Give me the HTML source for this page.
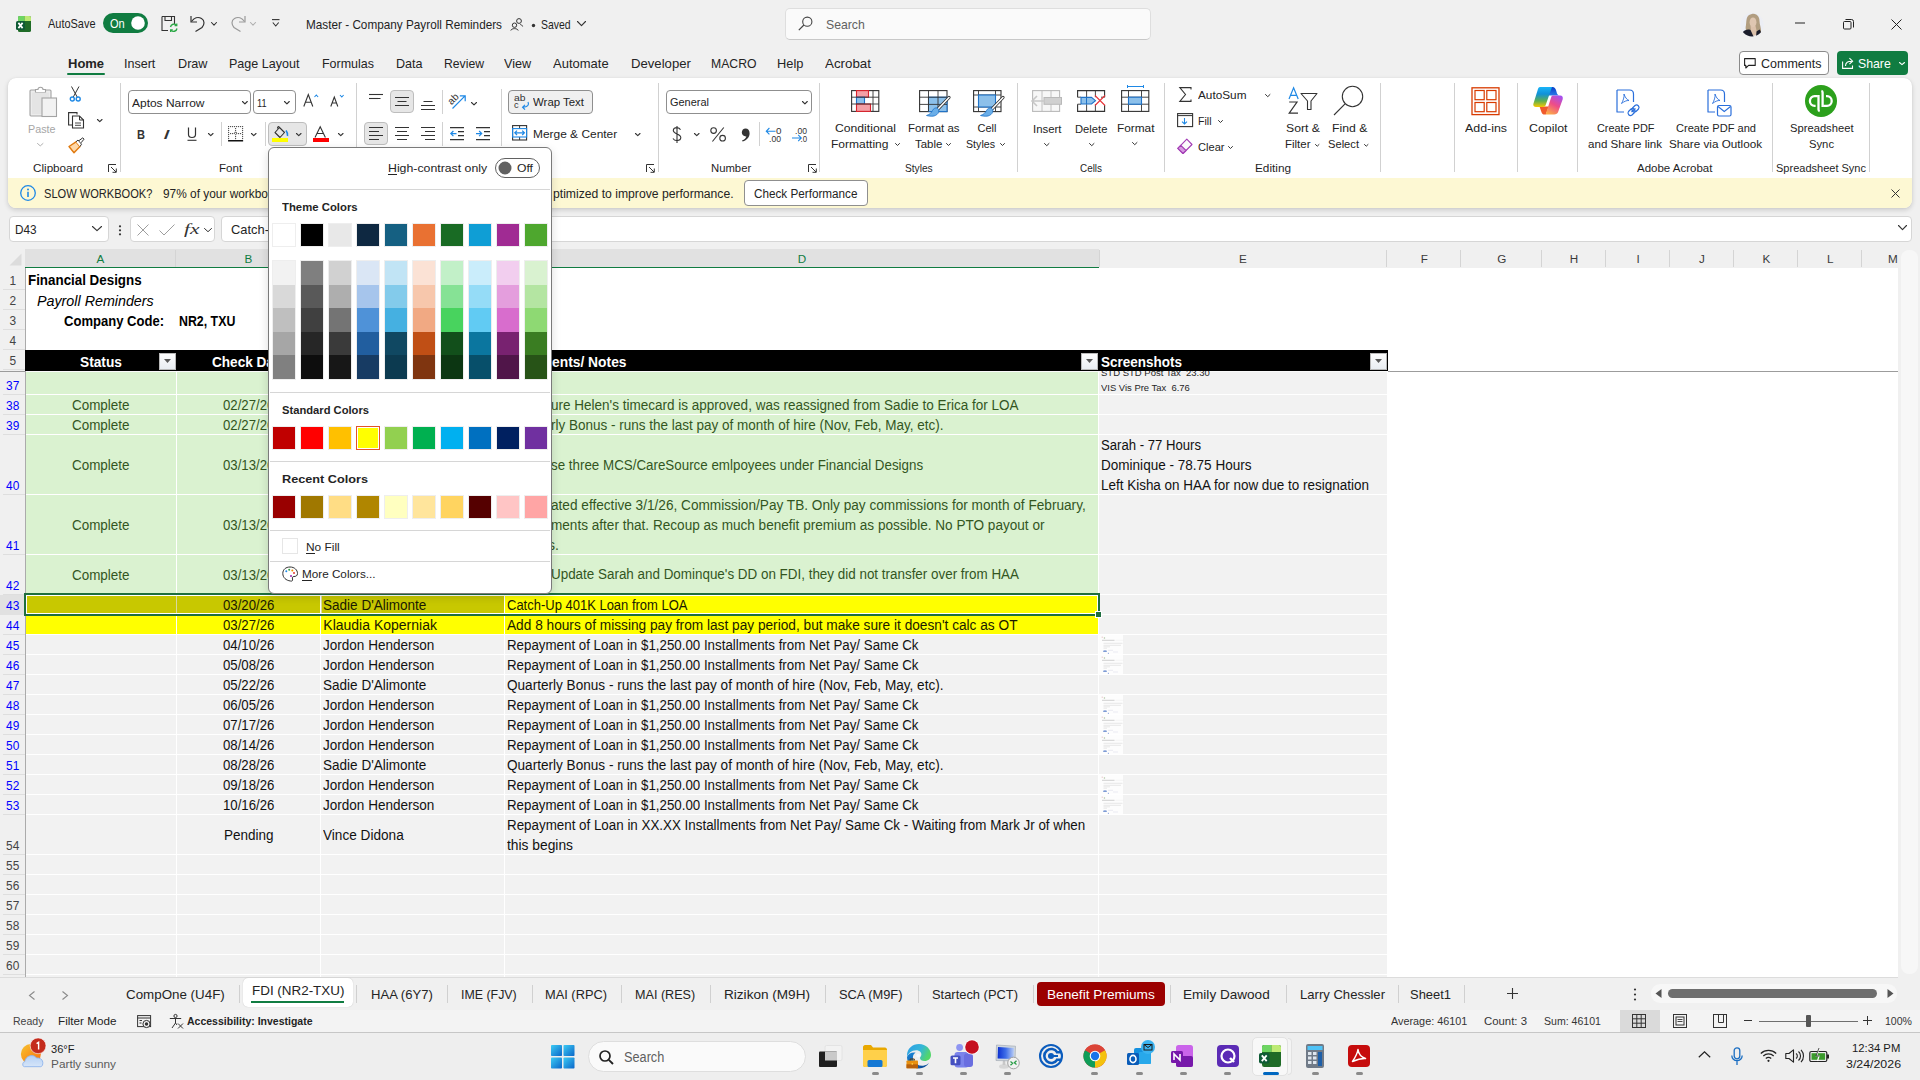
<!DOCTYPE html>
<html><head><meta charset="utf-8">
<style>
*{box-sizing:border-box;margin:0;padding:0}
html,body{width:1920px;height:1080px;overflow:hidden;background:#f0f0f0;font-family:"Liberation Sans",sans-serif;color:#1f1f1f}
.a{position:absolute}
.t{position:absolute;white-space:nowrap;line-height:1;transform-origin:0 0}
svg{position:absolute;overflow:visible}
</style></head><body>
<div class="a" style="left:0px;top:0px;width:1920px;height:78px;background:#f0f0f0;"></div>
<svg style="left:16px;top:16px;" width="16" height="16" viewBox="0 0 16 16"><rect x="2" y="0" width="13" height="16" rx="1.6" fill="#1f6b27"/>
<path d="M3.6 0 H8.5 V5 H2 V1.6 A1.6 1.6 0 0 1 3.6 0Z" fill="#6ed563"/><path d="M8.5 0 H13.4 A1.6 1.6 0 0 1 15 1.6 V5 H8.5Z" fill="#bdea74"/>
<rect x="0" y="5" width="9" height="9" rx="1.6" fill="#0e5a35"/>
<path d="M2.4 6.9 L6.6 12.1 M6.6 6.9 L2.4 12.1" stroke="#fff" stroke-width="1.7"/></svg>
<div class="t" style="left:47.8px;top:17.8px;font-size:12.6px;color:#1f1f1f;transform:scaleX(0.8698);">AutoSave</div>
<div class="a" style="left:103px;top:13px;width:45px;height:20px;background:#107c41;border-radius:10px;"></div>
<div class="t" style="left:109.7px;top:17.8px;font-size:12.6px;color:#ffffff;transform:scaleX(0.8750);">On</div>
<svg style="left:131px;top:16px;" width="14" height="14" viewBox="0 0 14 14"><circle cx="7" cy="7" r="6.8" fill="#fff"/></svg>
<svg style="left:161px;top:15px;" width="17" height="17" viewBox="0 0 17 17"><path d="M1 1.5 H13.5 V9 M1 1.5 V15.5 H7" fill="none" stroke="#333" stroke-width="1.1"/>
<path d="M4 1.5 V5.5 H10.5 V1.5" fill="none" stroke="#333" stroke-width="1.1"/>
<path d="M9.5 12 A3.6 3.6 0 0 1 15.6 10.2 M16 13.5 A3.6 3.6 0 0 1 9.9 15.3" fill="none" stroke="#2aa845" stroke-width="1.4"/>
<path d="M15.8 8.4 V10.6 H13.6 M9.6 17 V14.8 H11.8" fill="none" stroke="#2aa845" stroke-width="1.2"/></svg>
<svg style="left:190px;top:15px;" width="16" height="17" viewBox="0 0 16 17"><path d="M1 1 V7 H7" fill="none" stroke="#333" stroke-width="1.2"/><path d="M1.5 6.5 C4 3 8 1.5 11.5 3.5 C15 5.5 14.5 9.5 12 12.5 L5.5 16.5" fill="none" stroke="#333" stroke-width="1.2"/></svg>
<svg style="left:211px;top:22px;" width="6" height="3.5" viewBox="0 0 6 3.5"><path d="M0.5 0.5 L3.0 3.2 L5.5 0.5" fill="none" stroke="#333" stroke-width="1.1" stroke-linecap="round" stroke-linejoin="round"/></svg>
<svg style="left:230px;top:15px;" width="16" height="17" viewBox="0 0 16 17"><path d="M15 1 V7 H9" fill="none" stroke="#9a9a9a" stroke-width="1.2"/><path d="M14.5 6.5 C12 3 8 1.5 4.5 3.5 C1 5.5 1.5 9.5 4 12.5 L10.5 16.5" fill="none" stroke="#9a9a9a" stroke-width="1.2"/></svg>
<svg style="left:250px;top:22px;" width="6" height="3.5" viewBox="0 0 6 3.5"><path d="M0.5 0.5 L3.0 3.2 L5.5 0.5" fill="none" stroke="#b0b0b0" stroke-width="1.1" stroke-linecap="round" stroke-linejoin="round"/></svg>
<svg style="left:272px;top:19px;" width="8" height="9" viewBox="0 0 8 9"><path d="M0 0.6 H7.5" stroke="#333" stroke-width="1.1"/><path d="M0.8 3.5 L3.75 7 L6.7 3.5" fill="none" stroke="#333" stroke-width="1.1"/></svg>
<div class="t" style="left:305.6px;top:19.0px;font-size:12.6px;color:#1f1f1f;transform:scaleX(0.9335);">Master - Company Payroll Reminders</div>
<svg style="left:510px;top:18px;" width="13" height="13" viewBox="0 0 13 13"><circle cx="9" cy="3" r="2.4" fill="none" stroke="#333" stroke-width="1"/><circle cx="4.5" cy="7.2" r="2.2" fill="none" stroke="#333" stroke-width="1"/>
<path d="M0.8 12.5 C1.5 10 7.5 10 8.2 12.5" fill="none" stroke="#333" stroke-width="1"/><path d="M10.2 6.5 C11 6.5 12.4 7.3 12.6 8.5" fill="none" stroke="#333" stroke-width="1"/></svg>
<svg style="left:531px;top:23px;" width="5" height="5" viewBox="0 0 5 5"><circle cx="2.5" cy="2.5" r="1.7" fill="#333"/></svg>
<div class="t" style="left:541.4px;top:19.0px;font-size:12.6px;color:#1f1f1f;transform:scaleX(0.8289);">Saved</div>
<svg style="left:577px;top:21px;" width="9" height="5" viewBox="0 0 9 5"><path d="M0.5 0.5 L4.5 4.7 L8.5 0.5" fill="none" stroke="#333" stroke-width="1.1" stroke-linecap="round" stroke-linejoin="round"/></svg>
<div class="a" style="left:785px;top:8px;width:366px;height:32px;background:#fafafa;border:1px solid #dedede;border-bottom-color:#c8c8c8;border-radius:5px"></div>
<svg style="left:798px;top:16px;" width="15" height="15" viewBox="0 0 15 15"><circle cx="9.3" cy="5.7" r="4.6" fill="none" stroke="#444" stroke-width="1.1"/><path d="M5.9 9 L0.8 14.2" stroke="#444" stroke-width="1.2"/></svg>
<div class="t" style="left:826.0px;top:19.2px;font-size:12.6px;color:#616161;transform:scaleX(0.9724);">Search</div>
<svg style="left:1740px;top:13px;" width="24" height="24" viewBox="0 0 24 24"><defs><clipPath id="av"><circle cx="12" cy="11.7" r="11.7"/></clipPath></defs>
<g clip-path="url(#av)"><rect width="24" height="24" fill="#eceef4"/>
<path d="M12.5 0.8 C17 0.8 19.5 3.5 19.5 8 C19.5 12 21.5 15 21 19 C19 21 16 21 15 20 L9 20 C6 19 5 16 6 12 C6.5 9 6 4 9 2Z" fill="#b19d80"/>
<path d="M10.5 13 L15.5 13 L17.5 22 L11.5 23Z" fill="#dcc1ab"/>
<ellipse cx="13" cy="9.3" rx="3.4" ry="4.9" fill="#dfc6b1"/>
<path d="M2.5 19.5 C5 16.5 8 16 10.5 17 L14 24.5 H3Z" fill="#1b1d2b"/><path d="M16.5 18.5 L19.5 16.5 C21 18 21.5 20.5 20.5 22.5 L16 24Z" fill="#1b1d2b"/></g></svg>
<svg style="left:1795px;top:22px;" width="11" height="2" viewBox="0 0 11 2"><path d="M0 1 H10" stroke="#222" stroke-width="1"/></svg>
<svg style="left:1843px;top:19px;" width="11" height="11" viewBox="0 0 11 11"><rect x="0.5" y="2.5" width="7.5" height="7.5" rx="1" fill="none" stroke="#222" stroke-width="1"/><path d="M2.5 0.5 H8.5 A2 2 0 0 1 10.5 2.5 V8.5" fill="none" stroke="#222" stroke-width="1"/></svg>
<svg style="left:1891px;top:19px;" width="11" height="11" viewBox="0 0 11 11"><path d="M0.5 0.5 L10.5 10.5 M10.5 0.5 L0.5 10.5" stroke="#222" stroke-width="1"/></svg>
<div class="t" style="left:67.5px;top:58.0px;font-size:12.6px;color:#242424;font-weight:bold;transform:scaleX(1.0317);">Home</div>
<div class="t" style="left:124.4px;top:58.0px;font-size:12.6px;color:#242424;transform:scaleX(0.9938);">Insert</div>
<div class="t" style="left:177.5px;top:58.0px;font-size:12.6px;color:#242424;transform:scaleX(1.0038);">Draw</div>
<div class="t" style="left:229.4px;top:58.0px;font-size:12.6px;color:#242424;transform:scaleX(0.9954);">Page Layout</div>
<div class="t" style="left:322.4px;top:58.0px;font-size:12.6px;color:#242424;transform:scaleX(0.9908);">Formulas</div>
<div class="t" style="left:396.0px;top:58.0px;font-size:12.6px;color:#242424;">Data</div>
<div class="t" style="left:443.9px;top:58.0px;font-size:12.6px;color:#242424;transform:scaleX(0.9687);">Review</div>
<div class="t" style="left:503.8px;top:58.0px;font-size:12.6px;color:#242424;transform:scaleX(1.0048);">View</div>
<div class="t" style="left:552.9px;top:58.0px;font-size:12.6px;color:#242424;transform:scaleX(1.0315);">Automate</div>
<div class="t" style="left:630.8px;top:58.0px;font-size:12.6px;color:#242424;transform:scaleX(1.0435);">Developer</div>
<div class="t" style="left:710.8px;top:58.0px;font-size:12.6px;color:#242424;transform:scaleX(0.9706);">MACRO</div>
<div class="t" style="left:776.9px;top:58.0px;font-size:12.6px;color:#242424;transform:scaleX(1.0193);">Help</div>
<div class="t" style="left:824.8px;top:58.0px;font-size:12.6px;color:#242424;transform:scaleX(1.0599);">Acrobat</div>
<div class="a" style="left:67px;top:73px;width:38px;height:2.2px;background:#107c41;border-radius:1px;"></div>
<div class="a" style="left:1739px;top:51px;width:90px;height:24px;background:#fff;border:1px solid #8a8a8a;border-radius:4px"></div>
<svg style="left:1744px;top:58px;" width="12" height="11" viewBox="0 0 12 11"><path d="M0.6 0.6 H11.2 V7.4 H4.6 L1.8 10 V7.4 H0.6Z" fill="none" stroke="#222" stroke-width="1.1" stroke-linejoin="round"/></svg>
<div class="t" style="left:1760.6px;top:57.7px;font-size:12.6px;color:#242424;transform:scaleX(0.9920);">Comments</div>
<div class="a" style="left:1837px;top:51px;width:71px;height:24px;background:#107c41;border-radius:4px"></div>
<svg style="left:1842px;top:57px;" width="12" height="12" viewBox="0 0 12 12"><path d="M0.6 4.5 V11.4 H10.5 V8.5" fill="none" stroke="#fff" stroke-width="1.1"/><path d="M3.5 9 C3.5 5.5 6 4.2 9.5 4.2 M7.4 1.2 L10.6 4.2 L7.4 7.2" fill="none" stroke="#fff" stroke-width="1.1"/></svg>
<div class="t" style="left:1858.0px;top:57.7px;font-size:12.6px;color:#ffffff;transform:scaleX(0.9760);">Share</div>
<svg style="left:1899px;top:62px;" width="6" height="3" viewBox="0 0 6 3"><path d="M0.5 0.5 L3.0 2.7 L5.5 0.5" fill="none" stroke="#fff" stroke-width="1.1" stroke-linecap="round" stroke-linejoin="round"/></svg>
<div class="a" style="left:8px;top:78px;width:1904px;height:130px;background:#fff;border-radius:8px;box-shadow:0 2px 5px rgba(0,0,0,.16),0 0 1px rgba(0,0,0,.12);overflow:hidden"><div class="a" style="left:0;top:100px;width:1904px;height:30px;background:#fdf8d3"></div></div>
<svg style="left:29px;top:86px;" width="29" height="32" viewBox="0 0 29 32"><rect x="1" y="4" width="21" height="26" rx="1" fill="#ececec" stroke="#a3a3a3" stroke-width="1.1"/>
<path d="M6.5 6.5 V3.5 H9 C9 0.5 14 0.5 14 3.5 H16.5 V6.5Z" fill="#fff" stroke="#a3a3a3" stroke-width="1.1"/>
<rect x="3" y="6.5" width="17" height="21.5" fill="#e4e4e4"/>
<rect x="13" y="12" width="14.5" height="18.5" fill="#f2f2f2" stroke="#a3a3a3" stroke-width="1.1"/></svg>
<div class="t" style="left:27.6px;top:124.0px;font-size:11.2px;color:#a6a6a6;transform:scaleX(0.9613);">Paste</div>
<svg style="left:37px;top:143px;" width="6.5" height="3.2" viewBox="0 0 6.5 3.2"><path d="M0.5 0.5 L3.25 2.9000000000000004 L6.0 0.5" fill="none" stroke="#b0b0b0" stroke-width="1" stroke-linecap="round" stroke-linejoin="round"/></svg>
<svg style="left:69px;top:86px;" width="13" height="16" viewBox="0 0 13 16"><path d="M2.5 0.5 L8.2 11 M10 0.5 L4.3 11" stroke="#333" stroke-width="1"/>
<circle cx="3.3" cy="13" r="2" fill="none" stroke="#1e88e5" stroke-width="1.4"/><circle cx="9.2" cy="13" r="2" fill="none" stroke="#1e88e5" stroke-width="1.4"/></svg>
<svg style="left:68px;top:112px;" width="17" height="17" viewBox="0 0 17 17"><path d="M9 2.5 V0.6 H0.6 V13 H4" fill="none" stroke="#333" stroke-width="1.1"/>
<path d="M4.5 4 H11.5 L15.5 8 V16 H4.5Z" fill="#fff" stroke="#333" stroke-width="1.1"/><path d="M11.5 4 V8 H15.5" fill="none" stroke="#333" stroke-width="1"/>
<path d="M7 11 H13 M7 13.3 H13" stroke="#333" stroke-width="0.9"/></svg>
<svg style="left:96.5px;top:119px;" width="5.5" height="3" viewBox="0 0 5.5 3"><path d="M0.5 0.5 L2.75 2.7 L5.0 0.5" fill="none" stroke="#333" stroke-width="1.1" stroke-linecap="round" stroke-linejoin="round"/></svg>
<svg style="left:68px;top:137px;" width="17" height="17" viewBox="0 0 17 17"><path d="M1 9.5 L8 4.8 L12 9.5 L6 15.8Z" fill="#ffd8a8" stroke="#e07a10" stroke-width="1.4" stroke-linejoin="round"/>
<path d="M8 4.8 L10 3 L13.5 7.2 L12 9.5" fill="#fff" stroke="#333" stroke-width="1"/><path d="M11 3.6 L14.8 0.8 L16 2.2 L13 5.8" fill="#fff" stroke="#333" stroke-width="1"/></svg>
<div class="t" style="left:32.7px;top:162.8px;font-size:10.5px;color:#1f1f1f;transform:scaleX(1.1125);">Clipboard</div>
<svg style="left:108px;top:164px;" width="9" height="9" viewBox="0 0 9 9"><path d="M0.5 8 V0.5 H8" fill="none" stroke="#333" stroke-width="1"/><path d="M3 3 L8 8 M4.5 8.3 H8.3 V4.5" fill="none" stroke="#333" stroke-width="1"/></svg>
<div class="a" style="left:120px;top:83px;width:1px;height:89px;background:#d1d1d1;"></div>
<div class="a" style="left:128px;top:90px;width:123px;height:24px;border:1px solid #8f8f8f;border-radius:4px;background:#fff"></div>
<div class="t" style="left:131.5px;top:96.7px;font-size:11.7px;color:#242424;transform:scaleX(1.0240);">Aptos Narrow</div>
<svg style="left:241.5px;top:101px;" width="5.8" height="3.2" viewBox="0 0 5.8 3.2"><path d="M0.5 0.5 L2.9 2.9000000000000004 L5.3 0.5" fill="none" stroke="#333" stroke-width="1.1" stroke-linecap="round" stroke-linejoin="round"/></svg>
<div class="a" style="left:253px;top:90px;width:43px;height:24px;border:1px solid #8f8f8f;border-radius:4px;background:#fff"></div>
<div class="t" style="left:256.9px;top:96.7px;font-size:11.7px;color:#242424;transform:scaleX(0.7913);">11</div>
<svg style="left:283.8px;top:101px;" width="5.8" height="3.2" viewBox="0 0 5.8 3.2"><path d="M0.5 0.5 L2.9 2.9000000000000004 L5.3 0.5" fill="none" stroke="#333" stroke-width="1.1" stroke-linecap="round" stroke-linejoin="round"/></svg>
<svg style="left:303px;top:93px;" width="16" height="14" viewBox="0 0 16 14"><path d="M0.8 13.5 L5.3 1.5 L9.8 13.5 M2.5 9.3 H8.2" fill="none" stroke="#333" stroke-width="1.1"/><path d="M11.5 4 L13.3 2 L15.1 4" fill="none" stroke="#1e88e5" stroke-width="1.1"/></svg>
<svg style="left:330px;top:94px;" width="15" height="13" viewBox="0 0 15 13"><path d="M0.8 12.5 L4.3 3 L7.8 12.5 M2.1 9 H6.5" fill="none" stroke="#333" stroke-width="1.1"/><path d="M10 1 L11.8 3 L13.6 1" fill="none" stroke="#1e88e5" stroke-width="1.1"/></svg>
<div class="t" style="left:136.5px;top:127.8px;font-size:13.5px;color:#333;font-weight:bold;transform:scaleX(0.8206);">B</div>
<div class="t" style="left:162.5px;top:127.8px;font-size:13.5px;color:#333;font-style:italic;transform:scaleX(1.8663);">I</div>
<svg style="left:187px;top:127px;" width="10" height="14" viewBox="0 0 10 14"><path d="M1.5 0.5 V7.5 C1.5 11.5 8.5 11.5 8.5 7.5 V0.5" fill="none" stroke="#333" stroke-width="1.2"/><path d="M0.5 13.3 H9.5" stroke="#333" stroke-width="1.1"/></svg>
<svg style="left:207.5px;top:133px;" width="5.5" height="3" viewBox="0 0 5.5 3"><path d="M0.5 0.5 L2.75 2.7 L5.0 0.5" fill="none" stroke="#333" stroke-width="1.1" stroke-linecap="round" stroke-linejoin="round"/></svg>
<div class="a" style="left:221px;top:122px;width:1px;height:24px;background:#d1d1d1;"></div>
<svg style="left:228px;top:126px;" width="16" height="16" viewBox="0 0 16 16"><circle cx="0.6" cy="0.6" r="0.65" fill="#333"/><circle cx="2.6" cy="0.6" r="0.65" fill="#333"/><circle cx="4.6" cy="0.6" r="0.65" fill="#333"/><circle cx="6.6" cy="0.6" r="0.65" fill="#333"/><circle cx="8.6" cy="0.6" r="0.65" fill="#333"/><circle cx="10.6" cy="0.6" r="0.65" fill="#333"/><circle cx="12.6" cy="0.6" r="0.65" fill="#333"/><circle cx="14.6" cy="0.6" r="0.65" fill="#333"/><circle cx="0.6" cy="2.6" r="0.65" fill="#333"/><circle cx="14.6" cy="2.6" r="0.65" fill="#333"/><circle cx="0.6" cy="4.6" r="0.65" fill="#333"/><circle cx="14.6" cy="4.6" r="0.65" fill="#333"/><circle cx="0.6" cy="6.6" r="0.65" fill="#333"/><circle cx="14.6" cy="6.6" r="0.65" fill="#333"/><circle cx="0.6" cy="8.6" r="0.65" fill="#333"/><circle cx="14.6" cy="8.6" r="0.65" fill="#333"/><circle cx="0.6" cy="10.6" r="0.65" fill="#333"/><circle cx="14.6" cy="10.6" r="0.65" fill="#333"/><circle cx="0.6" cy="12.6" r="0.65" fill="#333"/><circle cx="14.6" cy="12.6" r="0.65" fill="#333"/><circle cx="7.6" cy="2.6" r="0.65" fill="#333"/><circle cx="7.6" cy="4.6" r="0.65" fill="#333"/><circle cx="7.6" cy="10.6" r="0.65" fill="#333"/><circle cx="7.6" cy="12.6" r="0.65" fill="#333"/><circle cx="2.6" cy="7.6" r="0.65" fill="#333"/><circle cx="4.6" cy="7.6" r="0.65" fill="#333"/><circle cx="10.6" cy="7.6" r="0.65" fill="#333"/><circle cx="12.6" cy="7.6" r="0.65" fill="#333"/><path d="M7.6 5.9 L9 7.3 L7.6 8.7 L6.2 7.3Z" fill="none" stroke="#333" stroke-width="0.9"/><rect x="0" y="13.9" width="15.2" height="1.5" rx="0.5" fill="#111"/></svg>
<svg style="left:251px;top:133px;" width="5.5" height="3" viewBox="0 0 5.5 3"><path d="M0.5 0.5 L2.75 2.7 L5.0 0.5" fill="none" stroke="#333" stroke-width="1.1" stroke-linecap="round" stroke-linejoin="round"/></svg>
<div class="a" style="left:265px;top:122px;width:1px;height:24px;background:#d1d1d1;"></div>
<div class="a" style="left:268px;top:122px;width:39px;height:24px;border:1px solid #bdbdbd;border-radius:4px;background:#e6e6e6"></div>
<svg style="left:273px;top:126px;" width="17" height="12" viewBox="0 0 17 12"><path d="M2 6.5 L6.5 1.5 L11.5 6.5 L7 11.5Z M6.5 1.5 C5.5 0 4.5 0.5 4.5 2.5" fill="none" stroke="#333" stroke-width="1.1" stroke-linejoin="round"/><path d="M13 4.5 C14.5 6.5 15 8 14.5 10" fill="none" stroke="#1e88e5" stroke-width="1.6"/></svg>
<div class="a" style="left:272px;top:138px;width:16px;height:4px;background:#ffff00;"></div>
<svg style="left:296px;top:133px;" width="5.5" height="3" viewBox="0 0 5.5 3"><path d="M0.5 0.5 L2.75 2.7 L5.0 0.5" fill="none" stroke="#333" stroke-width="1.1" stroke-linecap="round" stroke-linejoin="round"/></svg>
<svg style="left:314px;top:126px;" width="13" height="12" viewBox="0 0 13 12"><path d="M1 11.5 L6.2 0.8 L11.4 11.5 M3 7.5 H9.4" fill="none" stroke="#333" stroke-width="1.1"/></svg>
<div class="a" style="left:313px;top:138px;width:16px;height:4px;background:#ff0000;"></div>
<svg style="left:337.5px;top:133px;" width="5.5" height="3" viewBox="0 0 5.5 3"><path d="M0.5 0.5 L2.75 2.7 L5.0 0.5" fill="none" stroke="#333" stroke-width="1.1" stroke-linecap="round" stroke-linejoin="round"/></svg>
<div class="t" style="left:218.8px;top:162.8px;font-size:10.5px;color:#1f1f1f;transform:scaleX(1.1018);">Font</div>
<div class="a" style="left:356px;top:83px;width:1px;height:89px;background:#d1d1d1;"></div>
<svg style="left:369px;top:94px;" width="15" height="9" viewBox="0 0 15 9"><path d="M0 0.5 H14" stroke="#333" stroke-width="1.1"/><path d="M0 4.5 H9.5" stroke="#333" stroke-width="1.1"/></svg>
<div class="a" style="left:390px;top:90px;width:24px;height:23px;border:1px solid #bdbdbd;border-radius:4px;background:#e6e6e6"></div>
<svg style="left:395px;top:97px;" width="15" height="10" viewBox="0 0 15 10"><path d="M0 0.5 H14 M2.5 4.5 H11.5 M0 8.5 H14" stroke="#333" stroke-width="1.1"/></svg>
<svg style="left:421px;top:101px;" width="15" height="10" viewBox="0 0 15 10"><path d="M2.5 0.5 H11.5 M0 4.5 H14 M0 8.5 H14" stroke="#333" stroke-width="1.1"/></svg>
<svg style="left:369px;top:94px;" width="15" height="10" viewBox="0 0 15 10"><path d="M0 0.5 H14 M2.5 4.5 H11.5" stroke="#333" stroke-width="1.1"/></svg>
<div class="a" style="left:442px;top:90px;width:1px;height:24px;background:#d1d1d1;"></div>
<svg style="left:448px;top:92px;" width="19" height="18" viewBox="0 0 19 18"><text x="0" y="0" font-size="10" font-family="Liberation Sans" fill="#333" transform="translate(3.5 13.2) rotate(-45)">ab</text><path d="M4.5 16.5 L16.8 4.2 M11.8 3.8 H17.2 V9.2" fill="none" stroke="#1e88e5" stroke-width="1.2"/></svg>
<svg style="left:470.5px;top:101.5px;" width="6" height="3.2" viewBox="0 0 6 3.2"><path d="M0.5 0.5 L3.0 2.9000000000000004 L5.5 0.5" fill="none" stroke="#333" stroke-width="1.1" stroke-linecap="round" stroke-linejoin="round"/></svg>
<div class="a" style="left:501px;top:89px;width:1px;height:57px;background:#d1d1d1;"></div>
<div class="a" style="left:508px;top:90px;width:85px;height:24px;border:1px solid #8f8f8f;border-radius:4px;background:#f0f0f0"></div>
<svg style="left:514px;top:93px;" width="16" height="17" viewBox="0 0 16 17"><text x="0" y="8.2" font-size="9.2" font-family="Liberation Sans" fill="#333" textLength="11.5" lengthAdjust="spacingAndGlyphs">ab</text><text x="0" y="15" font-size="9.2" font-family="Liberation Sans" fill="#333">c</text><path d="M14 9 C15.5 12 13.5 14 9 14.2 M11 11.8 L8.6 14.2 L11 16.6" fill="none" stroke="#1e88e5" stroke-width="1.2"/></svg>
<div class="t" style="left:532.5px;top:96.1px;font-size:11.7px;color:#242424;transform:scaleX(0.9772);">Wrap Text</div>
<div class="a" style="left:364px;top:122px;width:24px;height:23px;border:1px solid #bdbdbd;border-radius:4px;background:#e6e6e6"></div>
<svg style="left:369px;top:127px;" width="15" height="14" viewBox="0 0 15 14"><path d="M0 0.5 H14 M0 4.5 H10 M0 8.5 H14 M0 12.5 H10" stroke="#333" stroke-width="1.1"/></svg>
<svg style="left:395px;top:127px;" width="15" height="14" viewBox="0 0 15 14"><path d="M0 0.5 H14 M2 4.5 H12 M0 8.5 H14 M2 12.5 H12" stroke="#333" stroke-width="1.1"/></svg>
<svg style="left:421px;top:127px;" width="15" height="14" viewBox="0 0 15 14"><path d="M0 0.5 H14 M4 4.5 H14 M0 8.5 H14 M4 12.5 H14" stroke="#333" stroke-width="1.1"/></svg>
<div class="a" style="left:442px;top:122px;width:1px;height:24px;background:#d1d1d1;"></div>
<svg style="left:450px;top:127px;" width="15" height="14" viewBox="0 0 15 14"><path d="M0 0.6 H14 M8 4.6 H14 M8 8.6 H14 M0 12.6 H14" stroke="#333" stroke-width="1.1"/><path d="M6.5 6.6 H0.8 M3.4 4 L0.8 6.6 L3.4 9.2" fill="none" stroke="#1e88e5" stroke-width="1.2"/></svg>
<svg style="left:476px;top:127px;" width="15" height="14" viewBox="0 0 15 14"><path d="M0 0.6 H14 M8 4.6 H14 M8 8.6 H14 M0 12.6 H14" stroke="#333" stroke-width="1.1"/><path d="M0 6.6 H5.7 M3.1 4 L5.7 6.6 L3.1 9.2" fill="none" stroke="#1e88e5" stroke-width="1.2"/></svg>
<svg style="left:512px;top:125px;" width="16" height="16" viewBox="0 0 16 16"><rect x="0.6" y="0.6" width="14" height="14.4" fill="none" stroke="#333" stroke-width="1.1"/><path d="M7.6 0.6 V3.6 M7.6 12 V15" stroke="#333" stroke-width="1"/><rect x="0.6" y="3.6" width="14" height="8.4" fill="none" stroke="#1e88e5" stroke-width="1.1"/><path d="M2.8 7.8 H12.4 M5 5.6 L2.8 7.8 L5 10 M10.2 5.6 L12.4 7.8 L10.2 10" fill="none" stroke="#1e88e5" stroke-width="1.2"/></svg>
<div class="t" style="left:532.5px;top:128.2px;font-size:11.7px;color:#242424;transform:scaleX(1.0206);">Merge &amp; Center</div>
<svg style="left:635px;top:133px;" width="5.5" height="3" viewBox="0 0 5.5 3"><path d="M0.5 0.5 L2.75 2.7 L5.0 0.5" fill="none" stroke="#333" stroke-width="1.1" stroke-linecap="round" stroke-linejoin="round"/></svg>
<svg style="left:646px;top:164px;" width="9" height="9" viewBox="0 0 9 9"><path d="M0.5 8 V0.5 H8" fill="none" stroke="#333" stroke-width="1"/><path d="M3 3 L8 8 M4.5 8.3 H8.3 V4.5" fill="none" stroke="#333" stroke-width="1"/></svg>
<div class="a" style="left:658px;top:83px;width:1px;height:89px;background:#d1d1d1;"></div>
<div class="a" style="left:666px;top:90px;width:146px;height:24px;border:1px solid #8f8f8f;border-radius:4px;background:#fff"></div>
<div class="t" style="left:669.6px;top:96.3px;font-size:11.7px;color:#242424;transform:scaleX(0.9356);">General</div>
<svg style="left:802px;top:101px;" width="5.8" height="3.2" viewBox="0 0 5.8 3.2"><path d="M0.5 0.5 L2.9 2.9000000000000004 L5.3 0.5" fill="none" stroke="#333" stroke-width="1.1" stroke-linecap="round" stroke-linejoin="round"/></svg>
<svg style="left:672px;top:126px;" width="10" height="17" viewBox="0 0 10 17"><path d="M8.5 3.8 C7.8 2.2 6.4 1.6 4.9 1.6 C2.7 1.6 1.3 2.8 1.3 4.6 C1.3 8.6 8.8 7.2 8.8 11.6 C8.8 13.4 7.2 14.6 5 14.6 C3.3 14.6 1.8 13.9 1 12.4 M5 0 V17" fill="none" stroke="#333" stroke-width="1.1"/></svg>
<svg style="left:693.5px;top:133px;" width="5.5" height="3" viewBox="0 0 5.5 3"><path d="M0.5 0.5 L2.75 2.7 L5.0 0.5" fill="none" stroke="#333" stroke-width="1.1" stroke-linecap="round" stroke-linejoin="round"/></svg>
<svg style="left:710px;top:127px;" width="17" height="15" viewBox="0 0 17 15"><circle cx="3.6" cy="3.6" r="2.8" fill="none" stroke="#333" stroke-width="1.1"/><circle cx="12.6" cy="11.2" r="2.8" fill="none" stroke="#333" stroke-width="1.1"/><path d="M13.8 0.5 L2.4 14.5" stroke="#333" stroke-width="1.1"/></svg>
<svg style="left:740.5px;top:128px;" width="10" height="14" viewBox="0 0 10 14"><path d="M4.5 0.5 C7 0.5 8.6 2.5 8.6 5.2 C8.6 9 6 12 1.6 13.6 L1 12.6 C3.6 11.3 5 9.8 5.4 8.4 C2.8 8.6 0.8 7 0.8 4.6 C0.8 2.1 2.5 0.5 4.5 0.5Z" fill="#333"/></svg>
<div class="a" style="left:759px;top:122px;width:1px;height:24px;background:#d1d1d1;"></div>
<svg style="left:765px;top:125px;" width="17" height="18" viewBox="0 0 17 18"><path d="M10.5 6.2 H1.3 M4.4 3 L1.3 6.2 L4.4 9.4" fill="none" stroke="#1e88e5" stroke-width="1.1"/><text x="11" y="8.8" font-size="9.5" font-family="Liberation Sans" fill="#333" textLength="5.5" lengthAdjust="spacingAndGlyphs">0</text><text x="4" y="16.8" font-size="9.5" font-family="Liberation Sans" fill="#333" textLength="12" lengthAdjust="spacingAndGlyphs">.00</text></svg>
<svg style="left:791px;top:125px;" width="17" height="18" viewBox="0 0 17 18"><text x="4" y="8.8" font-size="9.5" font-family="Liberation Sans" fill="#333" textLength="12" lengthAdjust="spacingAndGlyphs">.00</text><path d="M1 13 H10.3 M7.2 9.8 L10.3 13 L7.2 16.2" fill="none" stroke="#1e88e5" stroke-width="1.1"/><text x="9.5" y="16.8" font-size="9.5" font-family="Liberation Sans" fill="#333" textLength="6.5" lengthAdjust="spacingAndGlyphs">.0</text></svg>
<div class="t" style="left:710.8px;top:162.8px;font-size:10.5px;color:#1f1f1f;transform:scaleX(1.0765);">Number</div>
<svg style="left:808px;top:164px;" width="9" height="9" viewBox="0 0 9 9"><path d="M0.5 8 V0.5 H8" fill="none" stroke="#333" stroke-width="1"/><path d="M3 3 L8 8 M4.5 8.3 H8.3 V4.5" fill="none" stroke="#333" stroke-width="1"/></svg>
<div class="a" style="left:819px;top:83px;width:1px;height:89px;background:#d1d1d1;"></div>
<svg style="left:851px;top:90px;" width="29" height="22" viewBox="0 0 29 22"><rect x="0.6" y="0.6" width="27.2" height="20.8" fill="#fff" stroke="#333" stroke-width="1.1"/>
<rect x="5.5" y="0.6" width="12" height="6.6" fill="#f4a0a6" stroke="#d9232d" stroke-width="1.1"/>
<rect x="5.5" y="7.2" width="8" height="6.8" fill="#8cc0ea" stroke="#1e72c8" stroke-width="1.1"/>
<rect x="5.5" y="14" width="14" height="7.4" fill="#f4a0a6" stroke="#d9232d" stroke-width="1.1"/>
<path d="M22 0.6 V21.4 M0.6 7.2 H27.8 M0.6 14 H27.8" stroke="#333" stroke-width="0.9"/></svg>
<div class="t" style="left:834.6px;top:123.0px;font-size:11px;color:#242424;transform:scaleX(1.1065);">Conditional</div>
<div class="t" style="left:830.5px;top:139.1px;font-size:11px;color:#242424;transform:scaleX(1.0937);">Formatting</div>
<svg style="left:895px;top:143px;" width="5" height="2.8" viewBox="0 0 5 2.8"><path d="M0.5 0.5 L2.5 2.5 L4.5 0.5" fill="none" stroke="#333" stroke-width="1" stroke-linecap="round" stroke-linejoin="round"/></svg>
<svg style="left:919px;top:90px;" width="31" height="27" viewBox="0 0 31 27"><rect x="0.6" y="0.6" width="27.4" height="21" fill="#fff" stroke="#333" stroke-width="1.1"/>
<rect x="9.5" y="7.2" width="18.5" height="14.4" fill="#8cc0ea" stroke="#1e72c8" stroke-width="1.1"/>
<path d="M9.5 0.6 V21.6 M19 0.6 V21.6 M0.6 7.2 H28 M0.6 14.4 H28" stroke="#333" stroke-width="0.9"/>
<path d="M30 7.5 L19 19" stroke="#333" stroke-width="3.2" stroke-linecap="round"/><path d="M30 7.5 L19 19" stroke="#fff" stroke-width="1.5" stroke-linecap="round"/>
<path d="M18 18 C21 19 20.5 24.5 15 26 C12 26.5 9.5 26 7.5 25.5 C11 24.5 12.5 22.5 13.5 20.5 C14.5 18.5 16.5 17.5 18 18Z" fill="#6aaee8" stroke="#1e72c8" stroke-width="0.8"/></svg>
<div class="t" style="left:907.5px;top:123.0px;font-size:11px;color:#242424;transform:scaleX(1.0402);">Format as</div>
<div class="t" style="left:914.6px;top:139.1px;font-size:11px;color:#242424;transform:scaleX(1.0419);">Table</div>
<svg style="left:946px;top:143px;" width="5" height="2.8" viewBox="0 0 5 2.8"><path d="M0.5 0.5 L2.5 2.5 L4.5 0.5" fill="none" stroke="#333" stroke-width="1" stroke-linecap="round" stroke-linejoin="round"/></svg>
<svg style="left:973px;top:90px;" width="31" height="27" viewBox="0 0 31 27"><rect x="0.6" y="0.6" width="27.4" height="21" fill="#fff" stroke="#333" stroke-width="1.1"/>
<path d="M5.5 0.6 V21.6 M22.5 0.6 V21.6 M0.6 5 H28 M0.6 17 H28" stroke="#333" stroke-width="0.9"/>
<rect x="5.5" y="5" width="17" height="12" fill="#8cc0ea" stroke="#1e72c8" stroke-width="1.1"/>
<path d="M30 7.5 L19 19" stroke="#333" stroke-width="3.2" stroke-linecap="round"/><path d="M30 7.5 L19 19" stroke="#fff" stroke-width="1.5" stroke-linecap="round"/>
<path d="M18 18 C21 19 20.5 24.5 15 26 C12 26.5 9.5 26 7.5 25.5 C11 24.5 12.5 22.5 13.5 20.5 C14.5 18.5 16.5 17.5 18 18Z" fill="#6aaee8" stroke="#1e72c8" stroke-width="0.8"/></svg>
<div class="t" style="left:977.5px;top:123.0px;font-size:11px;color:#242424;">Cell</div>
<div class="t" style="left:966.0px;top:139.1px;font-size:11px;color:#242424;transform:scaleX(0.9681);">Styles</div>
<svg style="left:999.5px;top:143px;" width="5" height="2.8" viewBox="0 0 5 2.8"><path d="M0.5 0.5 L2.5 2.5 L4.5 0.5" fill="none" stroke="#333" stroke-width="1" stroke-linecap="round" stroke-linejoin="round"/></svg>
<div class="t" style="left:904.6px;top:162.8px;font-size:10.5px;color:#1f1f1f;transform:scaleX(0.9688);">Styles</div>
<div class="a" style="left:1017px;top:83px;width:1px;height:89px;background:#d1d1d1;"></div>
<svg style="left:1031px;top:90px;" width="32" height="22" viewBox="0 0 32 22"><rect x="1.6" y="0.6" width="27" height="20.8" fill="#f7f7f7" stroke="#b9b9b9" stroke-width="1.1"/>
<path d="M11 0.6 V21.4 M20 0.6 V21.4" stroke="#b9b9b9" stroke-width="0.9"/>
<rect x="13" y="7.5" width="17.5" height="6.8" fill="#d0d0d0" stroke="#b9b9b9" stroke-width="1"/>
<path d="M14 11 H1.5 M6 6 L1 11 L6 16" fill="none" stroke="#c7c7c7" stroke-width="1.6"/></svg>
<div class="t" style="left:1032.6px;top:124.0px;font-size:11px;color:#242424;transform:scaleX(1.0323);">Insert</div>
<svg style="left:1044px;top:143px;" width="5.5" height="3" viewBox="0 0 5.5 3"><path d="M0.5 0.5 L2.75 2.7 L5.0 0.5" fill="none" stroke="#333" stroke-width="1" stroke-linecap="round" stroke-linejoin="round"/></svg>
<svg style="left:1077px;top:90px;" width="30" height="22" viewBox="0 0 30 22"><path d="M0.6 7.2 V0.6 H27.6 V7.2 M0.6 14.2 V21.4 H27.6 V15" fill="#fff" stroke="#333" stroke-width="1.1"/>
<path d="M9.6 0.6 V7.2 M18.4 0.6 V7.2 M9.6 14.2 V21.4 M18.4 14.2 V21.4 M0.6 7.2 H4 M0.6 14.2 H4 M24 7.2 H27.6" stroke="#333" stroke-width="0.9"/>
<path d="M4 7.4 H14.5 L18.5 10.7 L14.5 14 H4Z" fill="#8cc0ea" stroke="#1e72c8" stroke-width="1.1"/><path d="M9.5 7.4 V14" stroke="#1e72c8" stroke-width="1"/>
<path d="M18 5.5 L28 15.5 M28 5.5 L18 15.5" stroke="#e8363a" stroke-width="1.1"/></svg>
<div class="t" style="left:1074.6px;top:124.0px;font-size:11px;color:#242424;transform:scaleX(1.0190);">Delete</div>
<svg style="left:1088.5px;top:143px;" width="5.5" height="3" viewBox="0 0 5.5 3"><path d="M0.5 0.5 L2.75 2.7 L5.0 0.5" fill="none" stroke="#333" stroke-width="1" stroke-linecap="round" stroke-linejoin="round"/></svg>
<svg style="left:1121px;top:85px;" width="29" height="27" viewBox="0 0 29 27"><path d="M6.5 1.5 H22.5 M6.5 0 V3 M22.5 0 V3" stroke="#1e88e5" stroke-width="1"/>
<rect x="0.6" y="5.6" width="27.2" height="20.8" fill="#fff" stroke="#333" stroke-width="1.1"/>
<path d="M7.5 5.6 V26.4 M20.5 5.6 V26.4 M0.6 12.2 H27.8 M0.6 19.2 H27.8" stroke="#333" stroke-width="0.9"/>
<rect x="7.5" y="12.2" width="13" height="7" fill="#8cc0ea" stroke="#1e72c8" stroke-width="1.1"/></svg>
<div class="t" style="left:1116.5px;top:123.0px;font-size:11px;color:#242424;transform:scaleX(1.0764);">Format</div>
<svg style="left:1132px;top:142px;" width="5.5" height="3" viewBox="0 0 5.5 3"><path d="M0.5 0.5 L2.75 2.7 L5.0 0.5" fill="none" stroke="#333" stroke-width="1" stroke-linecap="round" stroke-linejoin="round"/></svg>
<div class="t" style="left:1080.0px;top:162.8px;font-size:10.5px;color:#1f1f1f;transform:scaleX(0.9427);">Cells</div>
<div class="a" style="left:1164px;top:83px;width:1px;height:89px;background:#d1d1d1;"></div>
<svg style="left:1179px;top:87px;" width="13" height="15" viewBox="0 0 13 15"><path d="M12 2.5 V0.6 H0.8 L6.5 7.5 L0.8 14.4 H12 V12.5" fill="none" stroke="#333" stroke-width="1.1"/></svg>
<div class="t" style="left:1197.5px;top:90.4px;font-size:11px;color:#242424;transform:scaleX(1.0719);">AutoSum</div>
<svg style="left:1264.5px;top:94px;" width="5.5" height="3" viewBox="0 0 5.5 3"><path d="M0.5 0.5 L2.75 2.7 L5.0 0.5" fill="none" stroke="#333" stroke-width="1" stroke-linecap="round" stroke-linejoin="round"/></svg>
<svg style="left:1177px;top:113px;" width="17" height="14" viewBox="0 0 17 14"><rect x="0.6" y="0.6" width="15" height="13" fill="#fff" stroke="#333" stroke-width="1.1"/><path d="M0.6 2.6 H15.6" stroke="#333" stroke-width="1"/><path d="M7.5 5 V11 M5 8.7 L7.5 11 L10 8.7" fill="none" stroke="#1e88e5" stroke-width="1.1"/></svg>
<div class="t" style="left:1197.5px;top:115.8px;font-size:11px;color:#242424;transform:scaleX(0.9608);">Fill</div>
<svg style="left:1217.5px;top:120px;" width="5" height="2.8" viewBox="0 0 5 2.8"><path d="M0.5 0.5 L2.5 2.5 L4.5 0.5" fill="none" stroke="#333" stroke-width="1" stroke-linecap="round" stroke-linejoin="round"/></svg>
<svg style="left:1177px;top:138px;" width="16" height="16" viewBox="0 0 16 16"><path d="M0.8 10.3 L9.8 1.2 L15 6.5 L6 15.5Z" fill="#fafafa" stroke="#a33db5" stroke-width="1.1" stroke-linejoin="round"/><path d="M0.8 10.3 L3.8 7.3 L9 12.5 L6 15.5Z" fill="#d69ae0" stroke="#a33db5" stroke-width="1.1" stroke-linejoin="round"/></svg>
<div class="t" style="left:1197.5px;top:142.0px;font-size:11px;color:#242424;transform:scaleX(1.0081);">Clear</div>
<svg style="left:1228px;top:146px;" width="5" height="2.8" viewBox="0 0 5 2.8"><path d="M0.5 0.5 L2.5 2.5 L4.5 0.5" fill="none" stroke="#333" stroke-width="1" stroke-linecap="round" stroke-linejoin="round"/></svg>
<svg style="left:1288px;top:87px;" width="31" height="28" viewBox="0 0 31 28"><path d="M1 12 L5.6 0.8 L10.2 12 M2.6 8.4 H8.6" fill="none" stroke="#1e88e5" stroke-width="1.2"/>
<path d="M1.2 15 H9 L1.2 26.2 H10" fill="none" stroke="#333" stroke-width="1.2"/>
<path d="M13 6.5 H29 L23 14 V22.5 H19.5 V14Z" fill="#fff" stroke="#333" stroke-width="1.1" stroke-linejoin="round"/></svg>
<div class="t" style="left:1286.0px;top:122.9px;font-size:11px;color:#242424;transform:scaleX(1.1123);">Sort &amp;</div>
<div class="t" style="left:1284.5px;top:139.1px;font-size:11px;color:#242424;transform:scaleX(1.0432);">Filter</div>
<svg style="left:1315px;top:143.5px;" width="4.5" height="2.5" viewBox="0 0 4.5 2.5"><path d="M0.5 0.5 L2.25 2.2 L4.0 0.5" fill="none" stroke="#333" stroke-width="1" stroke-linecap="round" stroke-linejoin="round"/></svg>
<svg style="left:1333px;top:86px;" width="32" height="31" viewBox="0 0 32 31"><circle cx="19.5" cy="10.5" r="10.2" fill="#fff" stroke="#333" stroke-width="1.1"/><path d="M12.3 17.7 L1 29" stroke="#333" stroke-width="1.1"/></svg>
<div class="t" style="left:1331.6px;top:122.9px;font-size:11px;color:#242424;transform:scaleX(1.1135);">Find &amp;</div>
<div class="t" style="left:1328.0px;top:139.1px;font-size:11px;color:#242424;transform:scaleX(1.0140);">Select</div>
<svg style="left:1364px;top:143.5px;" width="4.5" height="2.5" viewBox="0 0 4.5 2.5"><path d="M0.5 0.5 L2.25 2.2 L4.0 0.5" fill="none" stroke="#333" stroke-width="1" stroke-linecap="round" stroke-linejoin="round"/></svg>
<div class="t" style="left:1254.5px;top:162.8px;font-size:10.5px;color:#1f1f1f;transform:scaleX(1.1244);">Editing</div>
<div class="a" style="left:1380px;top:83px;width:1px;height:89px;background:#d1d1d1;"></div>
<div class="a" style="left:1454px;top:83px;width:1px;height:89px;background:#d1d1d1;"></div>
<svg style="left:1471px;top:87px;" width="30" height="28" viewBox="0 0 30 28"><rect x="1" y="0.8" width="27" height="26.8" fill="none" stroke="#d83b01" stroke-width="1.3"/><rect x="4" y="3.5" width="9.2" height="9.2" fill="none" stroke="#d83b01" stroke-width="1.2"/><rect x="15.8" y="3.5" width="9.2" height="9.2" fill="none" stroke="#d83b01" stroke-width="1.2"/><rect x="4" y="15.5" width="9.2" height="9.2" fill="none" stroke="#d83b01" stroke-width="1.2"/><rect x="15.8" y="15.5" width="9.2" height="9.2" fill="none" stroke="#d83b01" stroke-width="1.2"/></svg>
<div class="t" style="left:1465.0px;top:122.9px;font-size:11px;color:#242424;transform:scaleX(1.1261);">Add-ins</div>
<div class="a" style="left:1517px;top:83px;width:1px;height:89px;background:#d1d1d1;"></div>
<svg style="left:1533px;top:87px;" width="30" height="28" viewBox="0 0 30 28"><defs><linearGradient id="cp1" x1="0" y1="0" x2="0" y2="1"><stop offset="0" stop-color="#18b4f8"/><stop offset=".35" stop-color="#1191d8"/><stop offset=".7" stop-color="#5fb04f"/><stop offset="1" stop-color="#f8c800"/></linearGradient>
<linearGradient id="cp2" x1="0.8" y1="0" x2="0.3" y2="1"><stop offset="0" stop-color="#a550f0"/><stop offset=".5" stop-color="#ee4c88"/><stop offset="1" stop-color="#fba84a"/></linearGradient>
<linearGradient id="cp3" x1="0" y1="0" x2="0" y2="1"><stop offset="0" stop-color="#0a3fc8"/><stop offset="1" stop-color="#2a7ae8"/></linearGradient></defs>
<path d="M14.5 0 H19.5 C21.5 0 22.5 1.5 23 3 L24 6.5 C24.5 7.8 25.5 8.6 27 8.6 H14.8Z" fill="url(#cp3)"/>
<path d="M6.5 19.5 H15.8 L12.8 27.6 H11.5 C10 27.6 9 26.8 8.5 25.2Z" fill="#f05a2c"/>
<path d="M7 0 H19 L12.6 18.3 C12.1 19.6 11.2 20 10 20 H3 C1 20 -0.2 18.6 0.4 16.8 L4.6 3.2 C5.2 1.2 5.8 0 7 0Z" fill="url(#cp1)"/>
<path d="M19.8 8.6 H27.2 C29.2 8.6 30.3 10.2 29.7 12.2 L25.2 24.8 C24.6 26.6 23.2 27.6 21.2 27.6 H12.6 L18.1 10.5 C18.4 9.4 19 8.6 19.8 8.6Z" fill="url(#cp2)"/></svg>
<div class="t" style="left:1528.5px;top:122.9px;font-size:11px;color:#242424;transform:scaleX(1.1244);">Copilot</div>
<div class="a" style="left:1577px;top:83px;width:1px;height:89px;background:#d1d1d1;"></div>
<svg style="left:1616px;top:89px;" width="26" height="29" viewBox="0 0 26 29"><path d="M1 1 H13.5 C16 1 17.5 2.5 17.5 5 V13 M1 1 V23 H8" fill="none" stroke="#2a6fdb" stroke-width="1.2" stroke-linejoin="round"/><path d="M5.5 14.5 C7 12 8.5 8 8 5 C9 8 10.5 10.5 13 11.5 C10.5 11.3 8 12.5 5.5 14.5Z" fill="none" stroke="#2a6fdb" stroke-width="0.9"/><path d="M12.5 22.5 L15 20 A2.5 2.5 0 0 1 18.5 23.5 L16 26 A2.5 2.5 0 0 1 12.5 22.5Z M16.5 19 L19 16.5 A2.5 2.5 0 0 1 22.5 20 L20 22.5 A2.5 2.5 0 0 1 16.5 19Z M15.5 23 L19.5 19.5" fill="none" stroke="#2a6fdb" stroke-width="1.2"/></svg>
<div class="t" style="left:1596.5px;top:122.9px;font-size:11px;color:#242424;transform:scaleX(0.9901);">Create PDF</div>
<div class="t" style="left:1588.0px;top:139.1px;font-size:11px;color:#242424;transform:scaleX(1.0523);">and Share link</div>
<svg style="left:1707px;top:89px;" width="26" height="29" viewBox="0 0 26 29"><path d="M1 1 H13.5 C16 1 17.5 2.5 17.5 5 V13 M1 1 V23 H8" fill="none" stroke="#2a6fdb" stroke-width="1.2" stroke-linejoin="round"/><path d="M5.5 14.5 C7 12 8.5 8 8 5 C9 8 10.5 10.5 13 11.5 C10.5 11.3 8 12.5 5.5 14.5Z" fill="none" stroke="#2a6fdb" stroke-width="0.9"/><rect x="10.5" y="16.5" width="13.5" height="10.5" rx="1.5" fill="#fff" stroke="#2a6fdb" stroke-width="1.2"/><path d="M11 17.5 L17.25 22.5 L23.5 17.5" fill="none" stroke="#2a6fdb" stroke-width="1.1"/></svg>
<div class="t" style="left:1675.6px;top:122.9px;font-size:11px;color:#242424;transform:scaleX(1.0065);">Create PDF and</div>
<div class="t" style="left:1669.0px;top:139.1px;font-size:11px;color:#242424;transform:scaleX(1.0636);">Share via Outlook</div>
<div class="t" style="left:1637.0px;top:162.8px;font-size:10.5px;color:#1f1f1f;transform:scaleX(1.0941);">Adobe Acrobat</div>
<div class="a" style="left:1772px;top:83px;width:1px;height:89px;background:#d1d1d1;"></div>
<svg style="left:1805px;top:85px;" width="32" height="32" viewBox="0 0 32 32"><circle cx="16" cy="16" r="16" fill="#2ca01c"/><path d="M12.3 11.1 H9.6 A4.7 4.9 0 0 0 9.6 20.9 H10.6 M13.5 10 V24.5 C13.5 25.5 14 26 14.7 26.2" fill="none" stroke="#fff" stroke-width="2.3"/><path d="M18.8 20.9 H22 A4.7 4.9 0 0 0 22 11.1 H21 M17.6 22 V7.5 C17.6 6.5 17.1 6 16.4 5.8" fill="none" stroke="#fff" stroke-width="2.3"/></svg>
<div class="t" style="left:1789.5px;top:122.9px;font-size:11px;color:#242424;transform:scaleX(1.0180);">Spreadsheet</div>
<div class="t" style="left:1809.0px;top:139.1px;font-size:11px;color:#242424;transform:scaleX(1.0223);">Sync</div>
<div class="t" style="left:1776.0px;top:162.8px;font-size:10.5px;color:#1f1f1f;transform:scaleX(1.0489);">Spreadsheet Sync</div>
<div class="a" style="left:1869px;top:83px;width:1px;height:89px;background:#d1d1d1;"></div>
<svg style="left:20px;top:185px;" width="16" height="16" viewBox="0 0 16 16"><circle cx="8" cy="8" r="7.3" fill="none" stroke="#1e88e5" stroke-width="1.3"/><path d="M8 6.8 V12" stroke="#1e88e5" stroke-width="1.6"/><circle cx="8" cy="4.4" r="1" fill="#1e88e5"/></svg>
<div class="t" style="left:43.8px;top:188.4px;font-size:12px;color:#242424;transform:scaleX(0.9237);">SLOW WORKBOOK?</div>
<div class="t" style="left:163.0px;top:188.4px;font-size:12px;color:#242424;transform:scaleX(0.9896);">97% of your workbook has cells</div>
<div class="t" style="left:553.0px;top:188.4px;font-size:12px;color:#242424;transform:scaleX(1.0142);">ptimized to improve performance.</div>
<div class="a" style="left:744px;top:180px;width:124px;height:26px;border:1px solid #8f8f8f;border-radius:4px;background:#fff"></div>
<div class="t" style="left:753.6px;top:188.2px;font-size:12px;color:#242424;transform:scaleX(0.9751);">Check Performance</div>
<svg style="left:1891px;top:189px;" width="9" height="9" viewBox="0 0 9 9"><path d="M0.5 0.5 L8.5 8.5 M8.5 0.5 L0.5 8.5" stroke="#333" stroke-width="1"/></svg>
<div class="a" style="left:9px;top:216px;width:100px;height:26px;background:#fff;border:1px solid #d6d6d6;border-radius:4px"></div>
<div class="t" style="left:15.4px;top:223.7px;font-size:12.6px;color:#242424;transform:scaleX(0.9349);">D43</div>
<svg style="left:92px;top:226px;" width="10" height="5" viewBox="0 0 10 5"><path d="M0.5 0.5 L5.0 4.7 L9.5 0.5" fill="none" stroke="#333" stroke-width="1.1" stroke-linecap="round" stroke-linejoin="round"/></svg>
<svg style="left:118px;top:225px;" width="4" height="11" viewBox="0 0 4 11"><circle cx="2" cy="1.3" r="1.1" fill="#333"/><circle cx="2" cy="5.3" r="1.1" fill="#333"/><circle cx="2" cy="9.3" r="1.1" fill="#333"/></svg>
<div class="a" style="left:130px;top:216px;width:85px;height:26px;background:#fff;border:1px solid #d6d6d6;border-radius:4px"></div>
<svg style="left:137px;top:224px;" width="12" height="12" viewBox="0 0 12 12"><path d="M0.5 0.5 L11.5 11.5 M11.5 0.5 L0.5 11.5" stroke="#9e9e9e" stroke-width="1"/></svg>
<svg style="left:159px;top:224px;" width="16" height="12" viewBox="0 0 16 12"><path d="M0.5 6.5 L5 11 L15.5 0.5" fill="none" stroke="#9e9e9e" stroke-width="1"/></svg>
<div class="t" style="left:183.5px;top:222.0px;font-size:15px;color:#333;font-style:italic;font-family:'Liberation Serif';transform:scaleX(1.4318);">fx</div>
<svg style="left:204px;top:228px;" width="8" height="4" viewBox="0 0 8 4"><path d="M0.5 0.5 L4.0 3.7 L7.5 0.5" fill="none" stroke="#333" stroke-width="1" stroke-linecap="round" stroke-linejoin="round"/></svg>
<div class="a" style="left:221px;top:216px;width:1691px;height:26px;background:#fff;border:1px solid #d6d6d6;border-radius:4px"></div>
<div class="t" style="left:231.0px;top:223.7px;font-size:12.6px;color:#242424;transform:scaleX(1.0228);">Catch-Up 401K Loan from LOA</div>
<svg style="left:1898px;top:225px;" width="9" height="5" viewBox="0 0 9 5"><path d="M0.5 0.5 L4.5 4.7 L8.5 0.5" fill="none" stroke="#333" stroke-width="1.1" stroke-linecap="round" stroke-linejoin="round"/></svg>
<div class="a" style="left:0px;top:249px;width:1898px;height:728px;background:#ffffff;"></div>
<div class="a" style="left:0px;top:249px;width:1898px;height:19px;background:#f0f0f0;"></div>
<div class="a" style="left:25px;top:249px;width:1074px;height:19px;background:#e1e1e1;"></div>
<div class="a" style="left:25px;top:266.6px;width:1074px;height:1.6px;background:#107c41;"></div>
<div class="a" style="left:1099px;top:268px;width:799px;height:1px;background:#bdbdbd;"></div>
<div class="a" style="left:175px;top:250px;width:1px;height:17px;background:#d4d4d4;"></div>
<div class="a" style="left:320px;top:250px;width:1px;height:17px;background:#d4d4d4;"></div>
<div class="a" style="left:504px;top:250px;width:1px;height:17px;background:#d4d4d4;"></div>
<div class="a" style="left:1099px;top:250px;width:1px;height:17px;background:#d4d4d4;"></div>
<div class="a" style="left:1386px;top:250px;width:1px;height:17px;background:#d4d4d4;"></div>
<div class="a" style="left:1460px;top:250px;width:1px;height:17px;background:#d4d4d4;"></div>
<div class="a" style="left:1541px;top:250px;width:1px;height:17px;background:#d4d4d4;"></div>
<div class="a" style="left:1605px;top:250px;width:1px;height:17px;background:#d4d4d4;"></div>
<div class="a" style="left:1669px;top:250px;width:1px;height:17px;background:#d4d4d4;"></div>
<div class="a" style="left:1733px;top:250px;width:1px;height:17px;background:#d4d4d4;"></div>
<div class="a" style="left:1797px;top:250px;width:1px;height:17px;background:#d4d4d4;"></div>
<div class="a" style="left:1861px;top:250px;width:1px;height:17px;background:#d4d4d4;"></div>
<div class="t" style="left:96.6px;top:252.7px;font-size:11.7px;color:#107c41;">A</div>
<div class="t" style="left:244.6px;top:252.7px;font-size:11.7px;color:#107c41;">B</div>
<div class="t" style="left:408.8px;top:252.7px;font-size:11.7px;color:#107c41;">C</div>
<div class="t" style="left:797.8px;top:252.7px;font-size:11.7px;color:#107c41;">D</div>
<div class="t" style="left:1239.1px;top:252.7px;font-size:11.7px;color:#3b3b3b;">E</div>
<div class="t" style="left:1420.7px;top:252.7px;font-size:11.7px;color:#3b3b3b;">F</div>
<div class="t" style="left:1497.2px;top:252.7px;font-size:11.7px;color:#3b3b3b;">G</div>
<div class="t" style="left:1569.8px;top:252.7px;font-size:11.7px;color:#3b3b3b;">H</div>
<div class="t" style="left:1636.4px;top:252.7px;font-size:11.7px;color:#3b3b3b;">I</div>
<div class="t" style="left:1699.1px;top:252.7px;font-size:11.7px;color:#3b3b3b;">J</div>
<div class="t" style="left:1762.4px;top:252.7px;font-size:11.7px;color:#3b3b3b;">K</div>
<div class="t" style="left:1827.0px;top:252.7px;font-size:11.7px;color:#3b3b3b;">L</div>
<div class="t" style="left:1888.1px;top:252.7px;font-size:11.7px;color:#3b3b3b;">M</div>
<div class="a" style="left:1898px;top:249px;width:22px;height:19px;background:#f0f0f0;"></div>
<svg style="left:9px;top:253px;" width="13" height="13" viewBox="0 0 13 13"><path d="M12.5 0.5 V12.5 H0.5Z" fill="#dcdcdc"/></svg>
<div class="a" style="left:0px;top:268px;width:25px;height:709px;background:#f0f0f0;"></div>
<div class="a" style="left:25px;top:268px;width:1px;height:709px;background:#ababab;"></div>
<div class="a" style="left:26px;top:268px;width:1872px;height:82px;background:#ffffff;"></div>
<div class="a" style="left:25px;top:350px;width:1363px;height:21px;background:#000000;"></div>
<div class="a" style="left:26px;top:371px;width:1073px;height:224px;background:#daf2d0;"></div>
<div class="a" style="left:1099px;top:371px;width:288px;height:606px;background:#f2f2f2;"></div>
<div class="a" style="left:26px;top:595px;width:1073px;height:20px;background:#c8c800;"></div>
<div class="a" style="left:505px;top:595px;width:594px;height:20px;background:#ffff00;"></div>
<div class="a" style="left:26px;top:615px;width:1073px;height:20px;background:#ffff00;"></div>
<div class="a" style="left:26px;top:635px;width:1073px;height:342px;background:#f2f2f2;"></div>
<div class="a" style="left:176px;top:371px;width:1px;height:606px;background:#ffffff;"></div>
<div class="a" style="left:320px;top:371px;width:1px;height:606px;background:#ffffff;"></div>
<div class="a" style="left:504px;top:371px;width:1px;height:606px;background:#ffffff;"></div>
<div class="a" style="left:1098px;top:371px;width:1px;height:606px;background:#ffffff;"></div>
<div class="a" style="left:26px;top:394px;width:1361px;height:1px;background:#ffffff;"></div>
<div class="a" style="left:26px;top:414px;width:1361px;height:1px;background:#ffffff;"></div>
<div class="a" style="left:26px;top:434px;width:1361px;height:1px;background:#ffffff;"></div>
<div class="a" style="left:26px;top:494px;width:1361px;height:1px;background:#ffffff;"></div>
<div class="a" style="left:26px;top:554px;width:1361px;height:1px;background:#ffffff;"></div>
<div class="a" style="left:26px;top:594px;width:1361px;height:1px;background:#ffffff;"></div>
<div class="a" style="left:26px;top:614px;width:1361px;height:1px;background:#ffffff;"></div>
<div class="a" style="left:26px;top:634px;width:1361px;height:1px;background:#ffffff;"></div>
<div class="a" style="left:26px;top:654px;width:1361px;height:1px;background:#ffffff;"></div>
<div class="a" style="left:26px;top:674px;width:1361px;height:1px;background:#ffffff;"></div>
<div class="a" style="left:26px;top:694px;width:1361px;height:1px;background:#ffffff;"></div>
<div class="a" style="left:26px;top:714px;width:1361px;height:1px;background:#ffffff;"></div>
<div class="a" style="left:26px;top:734px;width:1361px;height:1px;background:#ffffff;"></div>
<div class="a" style="left:26px;top:754px;width:1361px;height:1px;background:#ffffff;"></div>
<div class="a" style="left:26px;top:774px;width:1361px;height:1px;background:#ffffff;"></div>
<div class="a" style="left:26px;top:794px;width:1361px;height:1px;background:#ffffff;"></div>
<div class="a" style="left:26px;top:814px;width:1361px;height:1px;background:#ffffff;"></div>
<div class="a" style="left:26px;top:854px;width:1361px;height:1px;background:#ffffff;"></div>
<div class="a" style="left:26px;top:874px;width:1361px;height:1px;background:#ffffff;"></div>
<div class="a" style="left:26px;top:894px;width:1361px;height:1px;background:#ffffff;"></div>
<div class="a" style="left:26px;top:914px;width:1361px;height:1px;background:#ffffff;"></div>
<div class="a" style="left:26px;top:934px;width:1361px;height:1px;background:#ffffff;"></div>
<div class="a" style="left:26px;top:954px;width:1361px;height:1px;background:#ffffff;"></div>
<div class="a" style="left:26px;top:974px;width:1361px;height:1px;background:#ffffff;"></div>
<div class="a" style="left:26px;top:994px;width:1361px;height:1px;background:#ffffff;"></div>
<div class="a" style="left:176px;top:595px;width:1px;height:20px;background:#d8d8a0;"></div>
<div class="a" style="left:321px;top:595px;width:1px;height:20px;background:#d8d8a0;"></div>
<div class="a" style="left:0px;top:371px;width:25px;height:1px;background:#9c9c9c;"></div>
<div class="a" style="left:1388px;top:371px;width:510px;height:1px;background:#9c9c9c;"></div>
<div class="a" style="left:26px;top:371px;width:1361px;height:1px;background:#fafafa;"></div>
<div class="a" style="left:3px;top:289px;width:22px;height:1px;background:#dedede;"></div>
<div class="t" style="left:9.4px;top:276.3px;font-size:11.9px;color:#444444;">1</div>
<div class="a" style="left:3px;top:309px;width:22px;height:1px;background:#dedede;"></div>
<div class="t" style="left:9.4px;top:296.3px;font-size:11.9px;color:#444444;">2</div>
<div class="a" style="left:3px;top:329px;width:22px;height:1px;background:#dedede;"></div>
<div class="t" style="left:9.4px;top:316.3px;font-size:11.9px;color:#444444;">3</div>
<div class="a" style="left:3px;top:349px;width:22px;height:1px;background:#dedede;"></div>
<div class="t" style="left:9.4px;top:336.3px;font-size:11.9px;color:#444444;">4</div>
<div class="a" style="left:3px;top:369px;width:22px;height:1px;background:#dedede;"></div>
<div class="t" style="left:9.4px;top:356.3px;font-size:11.9px;color:#444444;">5</div>
<div class="a" style="left:3px;top:394px;width:22px;height:1px;background:#dedede;"></div>
<div class="t" style="left:6.1px;top:381.3px;font-size:11.9px;color:#0000ff;">37</div>
<div class="a" style="left:3px;top:414px;width:22px;height:1px;background:#dedede;"></div>
<div class="t" style="left:6.1px;top:401.3px;font-size:11.9px;color:#0000ff;">38</div>
<div class="a" style="left:3px;top:434px;width:22px;height:1px;background:#dedede;"></div>
<div class="t" style="left:6.1px;top:421.3px;font-size:11.9px;color:#0000ff;">39</div>
<div class="a" style="left:3px;top:494px;width:22px;height:1px;background:#dedede;"></div>
<div class="t" style="left:6.1px;top:481.3px;font-size:11.9px;color:#0000ff;">40</div>
<div class="a" style="left:3px;top:554px;width:22px;height:1px;background:#dedede;"></div>
<div class="t" style="left:6.1px;top:541.3px;font-size:11.9px;color:#0000ff;">41</div>
<div class="a" style="left:3px;top:594px;width:22px;height:1px;background:#dedede;"></div>
<div class="t" style="left:6.1px;top:581.3px;font-size:11.9px;color:#0000ff;">42</div>
<div class="a" style="left:3px;top:614px;width:22px;height:1px;background:#dedede;"></div>
<div class="a" style="left:0px;top:595px;width:25px;height:20px;background:#e1e1e1;"></div>
<div class="t" style="left:6.1px;top:601.3px;font-size:11.9px;color:#0000ff;">43</div>
<div class="a" style="left:3px;top:634px;width:22px;height:1px;background:#dedede;"></div>
<div class="t" style="left:6.1px;top:621.3px;font-size:11.9px;color:#0000ff;">44</div>
<div class="a" style="left:3px;top:654px;width:22px;height:1px;background:#dedede;"></div>
<div class="t" style="left:6.1px;top:641.3px;font-size:11.9px;color:#0000ff;">45</div>
<div class="a" style="left:3px;top:674px;width:22px;height:1px;background:#dedede;"></div>
<div class="t" style="left:6.1px;top:661.3px;font-size:11.9px;color:#0000ff;">46</div>
<div class="a" style="left:3px;top:694px;width:22px;height:1px;background:#dedede;"></div>
<div class="t" style="left:6.1px;top:681.3px;font-size:11.9px;color:#0000ff;">47</div>
<div class="a" style="left:3px;top:714px;width:22px;height:1px;background:#dedede;"></div>
<div class="t" style="left:6.1px;top:701.3px;font-size:11.9px;color:#0000ff;">48</div>
<div class="a" style="left:3px;top:734px;width:22px;height:1px;background:#dedede;"></div>
<div class="t" style="left:6.1px;top:721.3px;font-size:11.9px;color:#0000ff;">49</div>
<div class="a" style="left:3px;top:754px;width:22px;height:1px;background:#dedede;"></div>
<div class="t" style="left:6.1px;top:741.3px;font-size:11.9px;color:#0000ff;">50</div>
<div class="a" style="left:3px;top:774px;width:22px;height:1px;background:#dedede;"></div>
<div class="t" style="left:6.1px;top:761.3px;font-size:11.9px;color:#0000ff;">51</div>
<div class="a" style="left:3px;top:794px;width:22px;height:1px;background:#dedede;"></div>
<div class="t" style="left:6.1px;top:781.3px;font-size:11.9px;color:#0000ff;">52</div>
<div class="a" style="left:3px;top:814px;width:22px;height:1px;background:#dedede;"></div>
<div class="t" style="left:6.1px;top:801.3px;font-size:11.9px;color:#0000ff;">53</div>
<div class="a" style="left:3px;top:854px;width:22px;height:1px;background:#dedede;"></div>
<div class="t" style="left:6.1px;top:841.3px;font-size:11.9px;color:#444444;">54</div>
<div class="a" style="left:3px;top:874px;width:22px;height:1px;background:#dedede;"></div>
<div class="t" style="left:6.1px;top:861.3px;font-size:11.9px;color:#444444;">55</div>
<div class="a" style="left:3px;top:894px;width:22px;height:1px;background:#dedede;"></div>
<div class="t" style="left:6.1px;top:881.3px;font-size:11.9px;color:#444444;">56</div>
<div class="a" style="left:3px;top:914px;width:22px;height:1px;background:#dedede;"></div>
<div class="t" style="left:6.1px;top:901.3px;font-size:11.9px;color:#444444;">57</div>
<div class="a" style="left:3px;top:934px;width:22px;height:1px;background:#dedede;"></div>
<div class="t" style="left:6.1px;top:921.3px;font-size:11.9px;color:#444444;">58</div>
<div class="a" style="left:3px;top:954px;width:22px;height:1px;background:#dedede;"></div>
<div class="t" style="left:6.1px;top:941.3px;font-size:11.9px;color:#444444;">59</div>
<div class="a" style="left:3px;top:974px;width:22px;height:1px;background:#dedede;"></div>
<div class="t" style="left:6.1px;top:961.3px;font-size:11.9px;color:#444444;">60</div>
<div class="a" style="left:3px;top:994px;width:22px;height:1px;background:#dedede;"></div>
<div class="t" style="left:28.1px;top:272.8px;font-size:14.5px;color:#000;font-weight:bold;transform:scaleX(0.9214);">Financial Designs</div>
<div class="t" style="left:37.0px;top:293.8px;font-size:14.5px;color:#000;font-style:italic;transform:scaleX(0.9852);">Payroll Reminders</div>
<div class="t" style="left:64.4px;top:313.6px;font-size:14.5px;color:#000;font-weight:bold;transform:scaleX(0.8995);">Company Code:</div>
<div class="t" style="left:179.3px;top:313.6px;font-size:14.5px;color:#000;font-weight:bold;transform:scaleX(0.8522);">NR2, TXU</div>
<div class="t" style="left:80.0px;top:355.2px;font-size:14.2px;color:#fff;font-weight:bold;transform:scaleX(0.9663);">Status</div>
<div class="t" style="left:211.5px;top:355.2px;font-size:14.2px;color:#fff;font-weight:bold;transform:scaleX(0.9576);">Check Date</div>
<div class="t" style="left:551.5px;top:355.2px;font-size:14.2px;color:#fff;font-weight:bold;transform:scaleX(0.9742);">ents/ Notes</div>
<div class="t" style="left:1101.0px;top:355.2px;font-size:14.2px;color:#fff;font-weight:bold;transform:scaleX(0.9512);">Screenshots</div>
<div class="a" style="left:159px;top:353px;width:17px;height:17px;background:linear-gradient(#fdfdfd,#e9edf2);border:1px solid #b9b9b9"></div>
<svg style="left:164px;top:359px;" width="7" height="4" viewBox="0 0 7 4"><path d="M0 0 H7 L3.5 4Z" fill="#5a5a5a"/></svg>
<div class="a" style="left:1081px;top:353px;width:17px;height:17px;background:linear-gradient(#fdfdfd,#e9edf2);border:1px solid #b9b9b9"></div>
<svg style="left:1086px;top:359px;" width="7" height="4" viewBox="0 0 7 4"><path d="M0 0 H7 L3.5 4Z" fill="#5a5a5a"/></svg>
<div class="a" style="left:1370px;top:353px;width:17px;height:17px;background:linear-gradient(#fdfdfd,#e9edf2);border:1px solid #b9b9b9"></div>
<svg style="left:1375px;top:359px;" width="7" height="4" viewBox="0 0 7 4"><path d="M0 0 H7 L3.5 4Z" fill="#5a5a5a"/></svg>
<div class="a" style="left:1099px;top:371px;width:288px;height:23px;overflow:hidden">
<div class="t" style="left:2.0px;top:-2.7px;font-size:9.6px;color:#262626;transform:scaleX(0.9924);">STD STD Post Tax  23.30</div>
<div class="t" style="left:2.0px;top:12.3px;font-size:9.6px;color:#262626;transform:scaleX(0.9837);">VIS Vis Pre Tax  6.76</div>
</div>
<div class="t" style="left:72.2px;top:397.8px;font-size:14px;color:#33561f;transform:scaleX(0.9597);">Complete</div>
<div class="t" style="left:222.8px;top:397.8px;font-size:14px;color:#33561f;transform:scaleX(0.9432);">02/27/26</div>
<div class="t" style="left:72.2px;top:417.8px;font-size:14px;color:#33561f;transform:scaleX(0.9597);">Complete</div>
<div class="t" style="left:222.8px;top:417.8px;font-size:14px;color:#33561f;transform:scaleX(0.9432);">02/27/26</div>
<div class="t" style="left:72.2px;top:457.8px;font-size:14px;color:#33561f;transform:scaleX(0.9597);">Complete</div>
<div class="t" style="left:222.8px;top:457.8px;font-size:14px;color:#33561f;transform:scaleX(0.9432);">03/13/26</div>
<div class="t" style="left:72.2px;top:517.8px;font-size:14px;color:#33561f;transform:scaleX(0.9597);">Complete</div>
<div class="t" style="left:222.8px;top:517.8px;font-size:14px;color:#33561f;transform:scaleX(0.9432);">03/13/26</div>
<div class="t" style="left:72.2px;top:567.8px;font-size:14px;color:#33561f;transform:scaleX(0.9597);">Complete</div>
<div class="t" style="left:222.8px;top:567.8px;font-size:14px;color:#33561f;transform:scaleX(0.9432);">03/13/26</div>
<div class="t" style="left:551.2px;top:397.8px;font-size:14px;color:#33561f;transform:scaleX(0.9653);">ure Helen&#x27;s timecard is approved, was reassigned from Sadie to Erica for LOA</div>
<div class="t" style="left:551.2px;top:417.8px;font-size:14px;color:#33561f;transform:scaleX(0.9640);">rly Bonus - runs the last pay of month of hire (Nov, Feb, May, etc).</div>
<div class="t" style="left:551.2px;top:457.8px;font-size:14px;color:#33561f;transform:scaleX(0.9545);">se three MCS/CareSource emlpoyees under Financial Designs</div>
<div class="t" style="left:551.2px;top:497.8px;font-size:14px;color:#33561f;transform:scaleX(0.9734);">ated effective 3/1/26, Commission/Pay TB. Only pay commissions for month of February,</div>
<div class="t" style="left:551.2px;top:517.8px;font-size:14px;color:#33561f;transform:scaleX(0.9702);">ments after that. Recoup as much benefit premium as possible. No PTO payout or</div>
<div class="t" style="left:548.0px;top:537.8px;font-size:14px;color:#33561f;">s.</div>
<div class="t" style="left:550.6px;top:567.3px;font-size:14px;color:#33561f;transform:scaleX(0.9586);">Update Sarah and Dominque&#x27;s DD on FDI, they did not transfer over from HAA</div>
<div class="t" style="left:1101.0px;top:437.8px;font-size:14px;color:#111;transform:scaleX(0.9380);">Sarah - 77 Hours</div>
<div class="t" style="left:1101.0px;top:457.8px;font-size:14px;color:#111;transform:scaleX(0.9670);">Dominique - 78.75 Hours</div>
<div class="t" style="left:1101.0px;top:477.8px;font-size:14px;color:#111;transform:scaleX(0.9614);">Left Kisha on HAA for now due to resignation</div>
<div class="t" style="left:222.8px;top:597.8px;font-size:14px;color:#1a1a00;transform:scaleX(0.9432);">03/20/26</div>
<div class="t" style="left:323.3px;top:597.8px;font-size:14px;color:#1a1a00;transform:scaleX(0.9668);">Sadie D&#x27;Alimonte</div>
<div class="t" style="left:506.7px;top:597.8px;font-size:14px;color:#1a1a00;transform:scaleX(0.9278);">Catch-Up 401K Loan from LOA</div>
<div class="t" style="left:222.8px;top:617.8px;font-size:14px;color:#1a1a00;transform:scaleX(0.9432);">03/27/26</div>
<div class="t" style="left:323.3px;top:617.8px;font-size:14px;color:#1a1a00;">Klaudia Koperniak</div>
<div class="t" style="left:506.7px;top:617.8px;font-size:14px;color:#1a1a00;transform:scaleX(0.9771);">Add 8 hours of missing pay from last pay period, but make sure it doesn&#x27;t calc as OT</div>
<div class="t" style="left:222.8px;top:637.8px;font-size:14px;color:#111;transform:scaleX(0.9432);">04/10/26</div>
<div class="t" style="left:323.3px;top:637.8px;font-size:14px;color:#111;transform:scaleX(0.9671);">Jordon Henderson</div>
<div class="t" style="left:506.7px;top:637.8px;font-size:14px;color:#111;transform:scaleX(0.9511);">Repayment of Loan in $1,250.00 Installments from Net Pay/ Same Ck</div>
<div class="t" style="left:222.8px;top:657.8px;font-size:14px;color:#111;transform:scaleX(0.9432);">05/08/26</div>
<div class="t" style="left:323.3px;top:657.8px;font-size:14px;color:#111;transform:scaleX(0.9671);">Jordon Henderson</div>
<div class="t" style="left:506.7px;top:657.8px;font-size:14px;color:#111;transform:scaleX(0.9511);">Repayment of Loan in $1,250.00 Installments from Net Pay/ Same Ck</div>
<div class="t" style="left:222.8px;top:677.8px;font-size:14px;color:#111;transform:scaleX(0.9432);">05/22/26</div>
<div class="t" style="left:323.3px;top:677.8px;font-size:14px;color:#111;transform:scaleX(0.9668);">Sadie D&#x27;Alimonte</div>
<div class="t" style="left:506.7px;top:677.8px;font-size:14px;color:#111;transform:scaleX(0.9700);">Quarterly Bonus - runs the last pay of month of hire (Nov, Feb, May, etc).</div>
<div class="t" style="left:222.8px;top:697.8px;font-size:14px;color:#111;transform:scaleX(0.9432);">06/05/26</div>
<div class="t" style="left:323.3px;top:697.8px;font-size:14px;color:#111;transform:scaleX(0.9671);">Jordon Henderson</div>
<div class="t" style="left:506.7px;top:697.8px;font-size:14px;color:#111;transform:scaleX(0.9511);">Repayment of Loan in $1,250.00 Installments from Net Pay/ Same Ck</div>
<div class="t" style="left:222.8px;top:717.8px;font-size:14px;color:#111;transform:scaleX(0.9432);">07/17/26</div>
<div class="t" style="left:323.3px;top:717.8px;font-size:14px;color:#111;transform:scaleX(0.9671);">Jordon Henderson</div>
<div class="t" style="left:506.7px;top:717.8px;font-size:14px;color:#111;transform:scaleX(0.9511);">Repayment of Loan in $1,250.00 Installments from Net Pay/ Same Ck</div>
<div class="t" style="left:222.8px;top:737.8px;font-size:14px;color:#111;transform:scaleX(0.9432);">08/14/26</div>
<div class="t" style="left:323.3px;top:737.8px;font-size:14px;color:#111;transform:scaleX(0.9671);">Jordon Henderson</div>
<div class="t" style="left:506.7px;top:737.8px;font-size:14px;color:#111;transform:scaleX(0.9511);">Repayment of Loan in $1,250.00 Installments from Net Pay/ Same Ck</div>
<div class="t" style="left:222.8px;top:757.8px;font-size:14px;color:#111;transform:scaleX(0.9432);">08/28/26</div>
<div class="t" style="left:323.3px;top:757.8px;font-size:14px;color:#111;transform:scaleX(0.9668);">Sadie D&#x27;Alimonte</div>
<div class="t" style="left:506.7px;top:757.8px;font-size:14px;color:#111;transform:scaleX(0.9700);">Quarterly Bonus - runs the last pay of month of hire (Nov, Feb, May, etc).</div>
<div class="t" style="left:222.8px;top:777.8px;font-size:14px;color:#111;transform:scaleX(0.9432);">09/18/26</div>
<div class="t" style="left:323.3px;top:777.8px;font-size:14px;color:#111;transform:scaleX(0.9671);">Jordon Henderson</div>
<div class="t" style="left:506.7px;top:777.8px;font-size:14px;color:#111;transform:scaleX(0.9511);">Repayment of Loan in $1,250.00 Installments from Net Pay/ Same Ck</div>
<div class="t" style="left:222.8px;top:797.8px;font-size:14px;color:#111;transform:scaleX(0.9432);">10/16/26</div>
<div class="t" style="left:323.3px;top:797.8px;font-size:14px;color:#111;transform:scaleX(0.9671);">Jordon Henderson</div>
<div class="t" style="left:506.7px;top:797.8px;font-size:14px;color:#111;transform:scaleX(0.9511);">Repayment of Loan in $1,250.00 Installments from Net Pay/ Same Ck</div>
<div class="t" style="left:224.4px;top:827.8px;font-size:14px;color:#111;transform:scaleX(0.9634);">Pending</div>
<div class="t" style="left:323.3px;top:827.8px;font-size:14px;color:#111;transform:scaleX(0.9720);">Vince Didona</div>
<div class="t" style="left:506.7px;top:818.4px;font-size:14px;color:#111;transform:scaleX(0.9548);">Repayment of Loan in XX.XX Installments from Net Pay/ Same Ck - Waiting from Mark Jr of when</div>
<div class="t" style="left:506.7px;top:838.0px;font-size:14px;color:#111;transform:scaleX(0.9861);">this begins</div>
<div class="a" style="left:1099px;top:635px;width:24px;height:19px;background:#fdfdfd"></div>
<svg style="left:1099px;top:635px;" width="24" height="19" viewBox="0 0 24 19"><path d="M3.2 1.5 V3 M5.3 2 V4" stroke="#e0b8b8" stroke-width="0.7"/><path d="M5.6 2 V4" stroke="#b8dcb8" stroke-width="0.7"/><path d="M3 5.3 H15.5" stroke="#c9c9c9" stroke-width="0.9"/><path d="M16.5 5.3 H25" stroke="#ececec" stroke-width="0.5"/><path d="M4.5 8.3 H23.5 M4.5 10.3 H22 M4.5 11.8 H11 M4.5 13.2 H8" stroke="#e2e2e2" stroke-width="0.8"/><ellipse cx="6" cy="16.2" rx="2" ry="0.9" fill="#7e9bd4"/><path d="M9 15.3 H14 M14 17 H19" stroke="#e6e6f0" stroke-width="0.8"/><path d="M9.4 17.8 V19" stroke="#9db1e0" stroke-width="1.1"/></svg>
<div class="a" style="left:1099px;top:655px;width:24px;height:19px;background:#fdfdfd"></div>
<svg style="left:1099px;top:655px;" width="24" height="19" viewBox="0 0 24 19"><path d="M3.2 1.5 V3 M5.3 2 V4" stroke="#e0b8b8" stroke-width="0.7"/><path d="M5.6 2 V4" stroke="#b8dcb8" stroke-width="0.7"/><path d="M3 5.3 H15.5" stroke="#c9c9c9" stroke-width="0.9"/><path d="M16.5 5.3 H25" stroke="#ececec" stroke-width="0.5"/><path d="M4.5 8.3 H23.5 M4.5 10.3 H22 M4.5 11.8 H11 M4.5 13.2 H8" stroke="#e2e2e2" stroke-width="0.8"/><ellipse cx="6" cy="16.2" rx="2" ry="0.9" fill="#7e9bd4"/><path d="M9 15.3 H14 M14 17 H19" stroke="#e6e6f0" stroke-width="0.8"/><path d="M9.4 17.8 V19" stroke="#9db1e0" stroke-width="1.1"/></svg>
<div class="a" style="left:1099px;top:695px;width:24px;height:19px;background:#fdfdfd"></div>
<svg style="left:1099px;top:695px;" width="24" height="19" viewBox="0 0 24 19"><path d="M3.2 1.5 V3 M5.3 2 V4" stroke="#e0b8b8" stroke-width="0.7"/><path d="M5.6 2 V4" stroke="#b8dcb8" stroke-width="0.7"/><path d="M3 5.3 H15.5" stroke="#c9c9c9" stroke-width="0.9"/><path d="M16.5 5.3 H25" stroke="#ececec" stroke-width="0.5"/><path d="M4.5 8.3 H23.5 M4.5 10.3 H22 M4.5 11.8 H11 M4.5 13.2 H8" stroke="#e2e2e2" stroke-width="0.8"/><ellipse cx="6" cy="16.2" rx="2" ry="0.9" fill="#7e9bd4"/><path d="M9 15.3 H14 M14 17 H19" stroke="#e6e6f0" stroke-width="0.8"/><path d="M9.4 17.8 V19" stroke="#9db1e0" stroke-width="1.1"/></svg>
<div class="a" style="left:1099px;top:715px;width:24px;height:19px;background:#fdfdfd"></div>
<svg style="left:1099px;top:715px;" width="24" height="19" viewBox="0 0 24 19"><path d="M3.2 1.5 V3 M5.3 2 V4" stroke="#e0b8b8" stroke-width="0.7"/><path d="M5.6 2 V4" stroke="#b8dcb8" stroke-width="0.7"/><path d="M3 5.3 H15.5" stroke="#c9c9c9" stroke-width="0.9"/><path d="M16.5 5.3 H25" stroke="#ececec" stroke-width="0.5"/><path d="M4.5 8.3 H23.5 M4.5 10.3 H22 M4.5 11.8 H11 M4.5 13.2 H8" stroke="#e2e2e2" stroke-width="0.8"/><ellipse cx="6" cy="16.2" rx="2" ry="0.9" fill="#7e9bd4"/><path d="M9 15.3 H14 M14 17 H19" stroke="#e6e6f0" stroke-width="0.8"/><path d="M9.4 17.8 V19" stroke="#9db1e0" stroke-width="1.1"/></svg>
<div class="a" style="left:1099px;top:735px;width:24px;height:19px;background:#fdfdfd"></div>
<svg style="left:1099px;top:735px;" width="24" height="19" viewBox="0 0 24 19"><path d="M3.2 1.5 V3 M5.3 2 V4" stroke="#e0b8b8" stroke-width="0.7"/><path d="M5.6 2 V4" stroke="#b8dcb8" stroke-width="0.7"/><path d="M3 5.3 H15.5" stroke="#c9c9c9" stroke-width="0.9"/><path d="M16.5 5.3 H25" stroke="#ececec" stroke-width="0.5"/><path d="M4.5 8.3 H23.5 M4.5 10.3 H22 M4.5 11.8 H11 M4.5 13.2 H8" stroke="#e2e2e2" stroke-width="0.8"/><ellipse cx="6" cy="16.2" rx="2" ry="0.9" fill="#7e9bd4"/><path d="M9 15.3 H14 M14 17 H19" stroke="#e6e6f0" stroke-width="0.8"/><path d="M9.4 17.8 V19" stroke="#9db1e0" stroke-width="1.1"/></svg>
<div class="a" style="left:1099px;top:775px;width:24px;height:19px;background:#fdfdfd"></div>
<svg style="left:1099px;top:775px;" width="24" height="19" viewBox="0 0 24 19"><path d="M3.2 1.5 V3 M5.3 2 V4" stroke="#e0b8b8" stroke-width="0.7"/><path d="M5.6 2 V4" stroke="#b8dcb8" stroke-width="0.7"/><path d="M3 5.3 H15.5" stroke="#c9c9c9" stroke-width="0.9"/><path d="M16.5 5.3 H25" stroke="#ececec" stroke-width="0.5"/><path d="M4.5 8.3 H23.5 M4.5 10.3 H22 M4.5 11.8 H11 M4.5 13.2 H8" stroke="#e2e2e2" stroke-width="0.8"/><ellipse cx="6" cy="16.2" rx="2" ry="0.9" fill="#7e9bd4"/><path d="M9 15.3 H14 M14 17 H19" stroke="#e6e6f0" stroke-width="0.8"/><path d="M9.4 17.8 V19" stroke="#9db1e0" stroke-width="1.1"/></svg>
<div class="a" style="left:1099px;top:795px;width:24px;height:19px;background:#fdfdfd"></div>
<svg style="left:1099px;top:795px;" width="24" height="19" viewBox="0 0 24 19"><path d="M3.2 1.5 V3 M5.3 2 V4" stroke="#e0b8b8" stroke-width="0.7"/><path d="M5.6 2 V4" stroke="#b8dcb8" stroke-width="0.7"/><path d="M3 5.3 H15.5" stroke="#c9c9c9" stroke-width="0.9"/><path d="M16.5 5.3 H25" stroke="#ececec" stroke-width="0.5"/><path d="M4.5 8.3 H23.5 M4.5 10.3 H22 M4.5 11.8 H11 M4.5 13.2 H8" stroke="#e2e2e2" stroke-width="0.8"/><ellipse cx="6" cy="16.2" rx="2" ry="0.9" fill="#7e9bd4"/><path d="M9 15.3 H14 M14 17 H19" stroke="#e6e6f0" stroke-width="0.8"/><path d="M9.4 17.8 V19" stroke="#9db1e0" stroke-width="1.1"/></svg>
<div class="a" style="left:24px;top:593px;width:1076px;height:23px;border:2px solid #1e6e3e;box-shadow:inset 0 0 0 1px #fff"></div>
<div class="a" style="left:1095px;top:611px;width:7px;height:7px;background:#1e6e3e;border:1px solid #fff;"></div>
<div class="a" style="left:0px;top:977px;width:1920px;height:33px;background:#f0f0f0;"></div>
<div class="a" style="left:0px;top:977px;width:1898px;height:1px;background:#dcdcdc;"></div>
<svg style="left:28px;top:991px;" width="8" height="9" viewBox="0 0 8 9"><path d="M6.5 0.5 L1.5 4.5 L6.5 8.5" fill="none" stroke="#8a8a8a" stroke-width="1.1"/></svg>
<svg style="left:61px;top:991px;" width="8" height="9" viewBox="0 0 8 9"><path d="M1.5 0.5 L6.5 4.5 L1.5 8.5" fill="none" stroke="#8a8a8a" stroke-width="1.1"/></svg>
<div class="a" style="left:243px;top:978px;width:110px;height:29px;background:#fff;border-radius:5px;box-shadow:0 0 1px rgba(0,0,0,.25)"></div>
<div class="t" style="left:251.6px;top:984.4px;font-size:13.2px;color:#242424;transform:scaleX(1.0172);">FDI (NR2-TXU)</div>
<div class="a" style="left:251px;top:1001px;width:93px;height:2px;background:#107c41;"></div>
<div class="t" style="left:126.2px;top:987.6px;font-size:13.2px;color:#242424;transform:scaleX(1.0132);">CompOne (U4F)</div>
<div class="t" style="left:371.2px;top:987.6px;font-size:13.2px;color:#242424;transform:scaleX(0.9916);">HAA (6Y7)</div>
<div class="t" style="left:461.0px;top:987.6px;font-size:13.2px;color:#242424;transform:scaleX(0.9387);">IME (FJV)</div>
<div class="t" style="left:545.0px;top:987.6px;font-size:13.2px;color:#242424;transform:scaleX(0.9728);">MAI (RPC)</div>
<div class="t" style="left:634.8px;top:987.6px;font-size:13.2px;color:#242424;transform:scaleX(0.9554);">MAI (RES)</div>
<div class="t" style="left:724.3px;top:987.6px;font-size:13.2px;color:#242424;transform:scaleX(1.0296);">Rizikon (M9H)</div>
<div class="t" style="left:838.8px;top:987.6px;font-size:13.2px;color:#242424;transform:scaleX(0.9736);">SCA (M9F)</div>
<div class="t" style="left:932.3px;top:987.6px;font-size:13.2px;color:#242424;transform:scaleX(0.9780);">Startech (PCT)</div>
<div class="t" style="left:1183.3px;top:987.6px;font-size:13.2px;color:#242424;transform:scaleX(1.0287);">Emily Dawood</div>
<div class="t" style="left:1300.0px;top:987.6px;font-size:13.2px;color:#242424;transform:scaleX(0.9913);">Larry Chessler</div>
<div class="t" style="left:1410.0px;top:987.6px;font-size:13.2px;color:#242424;transform:scaleX(0.9809);">Sheet1</div>
<div class="a" style="left:238.75px;top:985px;width:1px;height:18px;background:#d0d0d0;"></div>
<div class="a" style="left:356.25px;top:985px;width:1px;height:18px;background:#d0d0d0;"></div>
<div class="a" style="left:447.3px;top:985px;width:1px;height:18px;background:#d0d0d0;"></div>
<div class="a" style="left:531.8px;top:985px;width:1px;height:18px;background:#d0d0d0;"></div>
<div class="a" style="left:621.3px;top:985px;width:1px;height:18px;background:#d0d0d0;"></div>
<div class="a" style="left:709.7px;top:985px;width:1px;height:18px;background:#d0d0d0;"></div>
<div class="a" style="left:825.4px;top:985px;width:1px;height:18px;background:#d0d0d0;"></div>
<div class="a" style="left:917.6px;top:985px;width:1px;height:18px;background:#d0d0d0;"></div>
<div class="a" style="left:1033px;top:985px;width:1px;height:18px;background:#d0d0d0;"></div>
<div class="a" style="left:1170px;top:985px;width:1px;height:18px;background:#d0d0d0;"></div>
<div class="a" style="left:1285.5px;top:985px;width:1px;height:18px;background:#d0d0d0;"></div>
<div class="a" style="left:1398.3px;top:985px;width:1px;height:18px;background:#d0d0d0;"></div>
<div class="a" style="left:1464.3px;top:985px;width:1px;height:18px;background:#d0d0d0;"></div>
<div class="a" style="left:1037px;top:982px;width:128px;height:24px;background:#9b0000;border-radius:4px"></div>
<div class="t" style="left:1047.3px;top:987.6px;font-size:13.2px;color:#ffffff;transform:scaleX(1.0349);">Benefit Premiums</div>
<svg style="left:1507px;top:988px;" width="11" height="11" viewBox="0 0 11 11"><path d="M5.5 0 V11 M0 5.5 H11" stroke="#333" stroke-width="1.1"/></svg>
<svg style="left:1633px;top:988px;" width="4" height="13" viewBox="0 0 4 13"><circle cx="2" cy="1.5" r="1.1" fill="#333"/><circle cx="2" cy="6.5" r="1.1" fill="#333"/><circle cx="2" cy="11.5" r="1.1" fill="#333"/></svg>
<div class="a" style="left:1651px;top:984px;width:246px;height:19px;background:#f7f7f7;border-radius:9px"></div>
<svg style="left:1655px;top:989px;" width="7" height="9" viewBox="0 0 7 9"><path d="M6.5 0 V9 L0.5 4.5Z" fill="#555"/></svg>
<svg style="left:1887px;top:989px;" width="7" height="9" viewBox="0 0 7 9"><path d="M0.5 0 V9 L6.5 4.5Z" fill="#555"/></svg>
<div class="a" style="left:1668px;top:989px;width:209px;height:9px;background:#6e6e6e;border-radius:4.5px;"></div>
<div class="a" style="left:1901px;top:250px;width:17px;height:724px;background:#f7f7f7;border-radius:8px"></div>
<div class="a" style="left:0px;top:1010px;width:1920px;height:22px;background:#f3f3f3;"></div>
<div class="a" style="left:0px;top:1032px;width:1920px;height:1px;background:#c6c6c6;"></div>
<div class="t" style="left:12.5px;top:1016.2px;font-size:10.8px;color:#444;transform:scaleX(0.9773);">Ready</div>
<div class="t" style="left:58.0px;top:1016.2px;font-size:10.8px;color:#242424;transform:scaleX(1.0833);">Filter Mode</div>
<svg style="left:137px;top:1015px;" width="15" height="14" viewBox="0 0 15 14"><rect x="0.6" y="0.6" width="13" height="11" fill="none" stroke="#333" stroke-width="1"/><path d="M0.6 3 H13.6 M2.5 5.5 H5 M2.5 8 H4.5" stroke="#333" stroke-width="1"/><circle cx="9.5" cy="9" r="3.6" fill="#f3f3f3" stroke="#333" stroke-width="1"/><circle cx="9.5" cy="9" r="1.7" fill="#333"/></svg>
<svg style="left:169px;top:1014px;" width="15" height="15" viewBox="0 0 15 15"><circle cx="6.5" cy="2" r="1.6" fill="none" stroke="#333" stroke-width="1"/><path d="M0.8 4.5 H12.2 M6.5 4.5 V9 L3 14 M6.5 9 L8 11" fill="none" stroke="#333" stroke-width="1"/><path d="M9 9.5 L14 14.5 M14 9.5 L9 14.5" stroke="#333" stroke-width="1"/></svg>
<div class="t" style="left:187.0px;top:1015.9px;font-size:10.8px;color:#242424;font-weight:bold;transform:scaleX(0.9728);">Accessibility: Investigate</div>
<div class="t" style="left:1391.0px;top:1015.6px;font-size:10.8px;color:#333;transform:scaleX(1.0034);">Average: 46101</div>
<div class="t" style="left:1484.3px;top:1015.6px;font-size:10.8px;color:#333;transform:scaleX(1.0535);">Count: 3</div>
<div class="t" style="left:1544.0px;top:1015.6px;font-size:10.8px;color:#333;transform:scaleX(0.9790);">Sum: 46101</div>
<div class="a" style="left:1620px;top:1010px;width:40px;height:22px;background:#dadada;"></div>
<svg style="left:1632px;top:1014px;" width="14" height="14" viewBox="0 0 14 14"><rect x="0.5" y="0.5" width="13" height="13" fill="none" stroke="#333" stroke-width="1"/><path d="M4.8 0.5 V13.5 M9.2 0.5 V13.5 M0.5 4.8 H13.5 M0.5 9.2 H13.5" stroke="#333" stroke-width="1"/></svg>
<svg style="left:1673px;top:1014px;" width="14" height="14" viewBox="0 0 14 14"><rect x="0.5" y="0.5" width="13" height="13" fill="none" stroke="#333" stroke-width="1"/><rect x="3" y="3" width="8" height="8" fill="none" stroke="#333" stroke-width="1"/><path d="M4.5 5.5 H9.5 M4.5 7.5 H9.5" stroke="#333" stroke-width="0.9"/></svg>
<svg style="left:1713px;top:1014px;" width="14" height="14" viewBox="0 0 14 14"><rect x="0.5" y="0.5" width="13" height="13" fill="none" stroke="#333" stroke-width="1"/><path d="M5.5 0.5 V8.5 H10.5 V0.5" fill="none" stroke="#333" stroke-width="1"/></svg>
<div class="a" style="left:1744px;top:1020px;width:8px;height:1px;background:#333;"></div>
<div class="a" style="left:1759px;top:1020.5px;width:99px;height:1.3px;background:#6f6f6f;"></div>
<div class="a" style="left:1806px;top:1015px;width:5px;height:12px;background:#555;border-radius:1px;"></div>
<svg style="left:1863px;top:1016px;" width="9" height="9" viewBox="0 0 9 9"><path d="M4.5 0 V9 M0 4.5 H9" stroke="#333" stroke-width="1"/></svg>
<div class="t" style="left:1885.0px;top:1015.6px;font-size:10.8px;color:#333;transform:scaleX(0.9778);">100%</div>
<div class="a" style="left:0px;top:1033px;width:1920px;height:47px;background:#eeeeee;"></div>
<svg style="left:18px;top:1036px;" width="28" height="34" viewBox="0 0 28 34"><defs><linearGradient id="sun" x1="0" y1="0" x2="1" y2="1"><stop offset="0" stop-color="#f6c431"/><stop offset="1" stop-color="#fb6c0a"/></linearGradient>
<linearGradient id="cld" x1="0" y1="0" x2="0" y2="1"><stop offset="0" stop-color="#b4d0f5"/><stop offset="1" stop-color="#d6e5f8"/></linearGradient></defs>
<circle cx="12.9" cy="18.1" r="10" fill="url(#sun)"/>
<path d="M6.5 30.7 C4 30.7 4.2 26 6.8 25.6 C7.4 21.8 10.6 19.5 14 19.6 C16 19.7 17.5 20.6 18.5 22 C21.5 21.6 24.6 23.2 24.8 26.2 C25 28.6 24.2 30.7 22.5 30.7Z" fill="url(#cld)" stroke="#8fb4ec" stroke-width="0.9"/>
<circle cx="20.1" cy="9.8" r="7.9" fill="#c42b1c" stroke="#fff" stroke-width="0.6"/>
<path d="M18.6 7.6 L20.6 6.3 V13.5" fill="none" stroke="#fff" stroke-width="1.4"/></svg>
<div class="t" style="left:50.5px;top:1042.9px;font-size:11.6px;color:#1b1b1b;transform:scaleX(0.9547);">36°F</div>
<div class="t" style="left:50.5px;top:1058.2px;font-size:11.6px;color:#5a5a5a;transform:scaleX(1.0189);">Partly sunny</div>
<svg style="left:551px;top:1045px;" width="24" height="24" viewBox="0 0 24 24"><defs><linearGradient id="wl" x1="0" y1="0" x2="1" y2="1"><stop offset="0" stop-color="#3ccbf4"/><stop offset="1" stop-color="#0a66c9"/></linearGradient></defs><rect x="0" y="0" width="11" height="11" rx="0.8" fill="url(#wl)"/><rect x="12.5" y="0" width="11" height="11" rx="0.8" fill="url(#wl)"/><rect x="0" y="12.5" width="11" height="11" rx="0.8" fill="url(#wl)"/><rect x="12.5" y="12.5" width="11" height="11" rx="0.8" fill="url(#wl)"/></svg>
<div class="a" style="left:588px;top:1041px;width:218px;height:31px;background:#fafafa;border:1px solid #dedede;border-radius:16px"></div>
<svg style="left:599px;top:1050px;" width="15" height="15" viewBox="0 0 15 15"><circle cx="6" cy="6" r="5" fill="none" stroke="#222" stroke-width="1.7"/><path d="M9.8 9.8 L14 14" stroke="#222" stroke-width="1.9"/></svg>
<div class="t" style="left:624.4px;top:1050.1px;font-size:14px;color:#5f5f5f;transform:scaleX(0.9085);">Search</div>
<svg style="left:819px;top:1045px;" width="24" height="22" viewBox="0 0 24 22"><rect x="6" y="0.5" width="17" height="15" rx="1.5" fill="#f2f2f2" stroke="#e0e0e0" stroke-width="0.8"/><rect x="0" y="6.5" width="18" height="15.5" rx="1" fill="#1f1f1f"/><rect x="6" y="6.5" width="12" height="9" fill="#c9c9c9"/></svg>
<svg style="left:863px;top:1045px;" width="24" height="22" viewBox="0 0 24 22"><path d="M0 2 C0 1 1 0 2 0 H8 L10 2.5 H22 C23 2.5 24 3.5 24 4.5 V20 C24 21 23 22 22 22 H2 C1 22 0 21 0 20Z" fill="#e9a800"/><path d="M0 5 H24 V20 C24 21 23 22 22 22 H2 C1 22 0 21 0 20Z" fill="#ffd04a"/><rect x="4.5" y="15" width="15" height="7" rx="1.5" fill="#1478d4"/></svg>
<svg style="left:906px;top:1043px;" width="26" height="26" viewBox="0 0 26 26"><defs><linearGradient id="eg1" x1="0" y1="0" x2="1" y2="0.4"><stop offset="0" stop-color="#2a9de6"/><stop offset=".6" stop-color="#35b6d8"/><stop offset="1" stop-color="#52d66a"/></linearGradient>
<linearGradient id="eg2" x1="0" y1="0" x2="0.6" y2="1"><stop offset="0" stop-color="#1a86d8"/><stop offset="1" stop-color="#0d4f9c"/></linearGradient></defs>
<path d="M1 12.5 C1 5.5 6.5 1 13 1 C20 1 25 6 25 12 C25 15.8 22.2 18 18.6 18 C16 18 14 17 14 15 C14 13.6 15.4 13 15.4 11.4 C15.4 8.8 12.8 7.2 10.2 7.2 C5.4 7.2 2.2 10.6 1 14Z" fill="url(#eg1)"/>
<path d="M1 14 C2.2 10.8 5.2 9 9.6 9.6 C7.2 11.2 6.2 14.2 7.6 17.6 C9.2 21.2 13.2 23.2 17.2 22.8 C19.8 22.5 21.8 21.3 23 19.8 C21 23.4 17 25.4 13 25.4 C6.4 25.4 1 20.4 1 14Z" fill="url(#eg2)"/>
<circle cx="12.2" cy="12.6" r="1.9" fill="#f4f8fc"/>
<rect x="0.5" y="17.5" width="11.5" height="7.8" rx="0.8" fill="#e8900f"/><rect x="0.5" y="21.3" width="11.5" height="4" fill="#b8610c"/>
<path d="M4.2 17.5 V16 H8.3 V17.5" fill="none" stroke="#5a3a10" stroke-width="1"/><rect x="5.6" y="20.2" width="1.4" height="1.4" fill="#ffd24a"/></svg>
<svg style="left:950px;top:1039px;" width="31" height="30" viewBox="0 0 31 30"><circle cx="9.6" cy="8.5" r="3.4" fill="#8e95f2"/>
<rect x="4.5" y="13" width="14.5" height="15.5" rx="3.2" fill="#7b83eb"/><rect x="14" y="14.5" width="9" height="13.5" rx="3" fill="#6a6ee0"/>
<rect x="0.5" y="16.5" width="10" height="9.8" rx="1.6" fill="#4550c0"/><path d="M3 19 H8 M5.5 19 V24.2" stroke="#fff" stroke-width="1.6"/>
<circle cx="22" cy="8" r="7.6" fill="#fff"/><circle cx="22" cy="8" r="6.8" fill="#c50f1f"/></svg>
<svg style="left:995px;top:1044px;" width="26" height="26" viewBox="0 0 26 26"><ellipse cx="9" cy="22.5" rx="5" ry="2.2" fill="#d6d6d6"/><path d="M8 16 L10 16 L10.5 21 L7.5 21Z" fill="#c8c8c8"/>
<path d="M1.5 1 L20.5 2.2 L20 17 L1 16.5Z" fill="#cfd6de" stroke="#9aa3ad" stroke-width="0.6"/>
<defs><linearGradient id="rg" x1="0" y1="0" x2="1" y2="0"><stop offset="0" stop-color="#0b2fd0"/><stop offset=".5" stop-color="#3f6ee8"/><stop offset="1" stop-color="#b9ccf5"/></linearGradient></defs>
<path d="M3 3 L19 4 L18.6 15 L2.6 14.6Z" fill="url(#rg)"/>
<circle cx="18.5" cy="19" r="5.8" fill="#f2f2f2" stroke="#9a9a9a" stroke-width="0.9"/>
<path d="M15.5 21.2 L17.6 19.2 L15.5 17.6 M21.5 16.8 L19.4 18.8 L21.5 20.4" fill="none" stroke="#2a9d48" stroke-width="1.3"/></svg>
<svg style="left:1039px;top:1044px;" width="24" height="24" viewBox="0 0 24 24"><circle cx="12" cy="12" r="11" fill="none" stroke="#0b5cbd" stroke-width="2.1"/>
<path d="M18.2 8.2 A7 7 0 1 0 18.2 15.8" fill="none" stroke="#0b5cbd" stroke-width="2.6"/>
<path d="M17 8.2 H22.5 M17 15.8 H22.5" stroke="#0b5cbd" stroke-width="2.4"/>
<circle cx="12" cy="12" r="3" fill="#0b5cbd"/><path d="M12 12 H19" stroke="#0b5cbd" stroke-width="2"/></svg>
<svg style="left:1083px;top:1044px;" width="24" height="24" viewBox="0 0 24 24"><circle cx="12" cy="12" r="11.5" fill="#db4437"/><path d="M12 12 L22 6.2 A11.5 11.5 0 0 1 12 23.5Z" fill="#f4c20d"/><path d="M12 12 L12 23.5 A11.5 11.5 0 0 1 2 6.2Z" fill="#0f9d58"/><path d="M2 6.2 A11.5 11.5 0 0 1 22 6.2 L12 6.2Z" fill="#db4437"/><circle cx="12" cy="12" r="5.3" fill="#fff"/><circle cx="12" cy="12" r="4.2" fill="#1a73e8"/></svg>
<svg style="left:1127px;top:1040px;" width="29" height="28" viewBox="0 0 29 28"><rect x="7" y="8" width="17" height="16" rx="2" fill="#1490df"/><rect x="12" y="12" width="12" height="12" rx="1" fill="#28a8ea"/><rect x="0" y="13" width="12" height="12" rx="1.5" fill="#0a5cb8"/><ellipse cx="6" cy="19" rx="3" ry="3.6" fill="none" stroke="#fff" stroke-width="1.6"/><circle cx="21" cy="7" r="7" fill="#3bb3f0"/><rect x="17" y="4.5" width="8" height="5.5" fill="none" stroke="#1b1b1b" stroke-width="1"/><path d="M17 4.5 L21 7.5 L25 4.5" fill="none" stroke="#1b1b1b" stroke-width="1"/></svg>
<svg style="left:1171px;top:1045px;" width="22" height="22" viewBox="0 0 22 22"><rect x="5" y="0" width="17" height="22" rx="2.5" fill="#ca64ea"/><rect x="5" y="11" width="17" height="11" rx="2" fill="#7719aa"/><rect x="0" y="6" width="12" height="12" rx="1.5" fill="#7719aa"/><path d="M3 15 V9 L9 15 V9" fill="none" stroke="#fff" stroke-width="1.6"/></svg>
<svg style="left:1217px;top:1045px;" width="22" height="22" viewBox="0 0 22 22"><rect x="0" y="0" width="22" height="22" rx="4" fill="#5b2bb5"/><circle cx="11" cy="11" r="6.5" fill="none" stroke="#fff" stroke-width="2.2"/><path d="M13 13 L17 17" stroke="#fff" stroke-width="2.4"/></svg>
<div class="a" style="left:1288px;top:1038px;width:4px;height:37px;background:#f4f4f4;border:1px solid #e2e2e2;border-left:none;border-radius:0 4px 4px 0"></div>
<div class="a" style="left:1252px;top:1037px;width:36px;height:39px;background:#f8f8f8;border:1px solid #e2e2e2;border-radius:5px"></div>
<svg style="left:1259px;top:1045px;" width="22" height="22" viewBox="0 0 22 22"><rect x="3" y="0" width="19" height="22" rx="2.2" fill="#1f6b27"/>
<path d="M5.2 0 H12.5 V7 H3 V2.2 A2.2 2.2 0 0 1 5.2 0Z" fill="#6ed563"/><path d="M12.5 0 H19.8 A2.2 2.2 0 0 1 22 2.2 V7 H12.5Z" fill="#bdea74"/>
<rect x="0" y="8" width="10.5" height="10.5" rx="2" fill="#0e5a35"/>
<path d="M2.8 10.3 L7.7 16.2 M7.7 10.3 L2.8 16.2" stroke="#fff" stroke-width="1.8"/></svg>
<div class="a" style="left:1263px;top:1072px;width:16px;height:3px;background:#0067c0;border-radius:1.5px;"></div>
<svg style="left:1306px;top:1044px;" width="18" height="24" viewBox="0 0 18 24"><rect x="0" y="0" width="18" height="24" rx="2" fill="#707a87"/><rect x="1.5" y="2" width="15" height="4" fill="#4fc3f7"/><g fill="#dfe6ee"><rect x="2" y="8" width="3.5" height="3"/><rect x="7" y="8" width="3.5" height="3"/><rect x="2" y="12.5" width="3.5" height="3"/><rect x="7" y="12.5" width="3.5" height="3"/><rect x="2" y="17" width="3.5" height="3"/><rect x="7" y="17" width="3.5" height="3"/></g><rect x="12" y="8" width="4" height="14" fill="#1e5fa8"/></svg>
<svg style="left:1348px;top:1045px;" width="22" height="22" viewBox="0 0 22 22"><rect x="0" y="0" width="22" height="22" rx="4" fill="#c60c0c"/><path d="M4.5 16.5 C7.5 12 9.5 8 10 4.5 C10.5 8.5 13 12 17.5 13.5 C13 13.3 9 14.5 4.5 16.5Z" fill="none" stroke="#fff" stroke-width="1.5" stroke-linejoin="round"/></svg>
<div class="a" style="left:871.5px;top:1072px;width:7px;height:2.5px;background:#8a8a8a;border-radius:1.5px;"></div>
<div class="a" style="left:915.5px;top:1072px;width:7px;height:2.5px;background:#8a8a8a;border-radius:1.5px;"></div>
<div class="a" style="left:959.5px;top:1072px;width:7px;height:2.5px;background:#8a8a8a;border-radius:1.5px;"></div>
<div class="a" style="left:1003.5px;top:1072px;width:7px;height:2.5px;background:#8a8a8a;border-radius:1.5px;"></div>
<div class="a" style="left:1090.5px;top:1072px;width:7px;height:2.5px;background:#8a8a8a;border-radius:1.5px;"></div>
<div class="a" style="left:1135.5px;top:1072px;width:7px;height:2.5px;background:#8a8a8a;border-radius:1.5px;"></div>
<div class="a" style="left:1179.5px;top:1072px;width:7px;height:2.5px;background:#8a8a8a;border-radius:1.5px;"></div>
<div class="a" style="left:1223.5px;top:1072px;width:7px;height:2.5px;background:#8a8a8a;border-radius:1.5px;"></div>
<div class="a" style="left:1311.5px;top:1072px;width:7px;height:2.5px;background:#8a8a8a;border-radius:1.5px;"></div>
<div class="a" style="left:1355.5px;top:1072px;width:7px;height:2.5px;background:#8a8a8a;border-radius:1.5px;"></div>
<svg style="left:1698px;top:1051px;" width="13" height="7" viewBox="0 0 13 7"><path d="M0.8 6.3 L6.5 0.8 L12.2 6.3" fill="none" stroke="#222" stroke-width="1.2"/></svg>
<svg style="left:1731px;top:1047px;" width="12" height="19" viewBox="0 0 12 19"><rect x="3.2" y="0.8" width="5.6" height="11" rx="2.8" fill="none" stroke="#1b6ec2" stroke-width="1.3"/><path d="M0.8 8.5 A5.2 5.2 0 0 0 11.2 8.5 M6 13.7 V18" fill="none" stroke="#1b6ec2" stroke-width="1.3"/></svg>
<svg style="left:1760px;top:1049px;" width="17" height="13" viewBox="0 0 17 13"><path d="M0.8 4.5 A11 11 0 0 1 16.2 4.5 M3.3 7 A7.5 7.5 0 0 1 13.7 7 M5.8 9.5 A4 4 0 0 1 11.2 9.5" fill="none" stroke="#222" stroke-width="1.2"/><circle cx="8.5" cy="11.8" r="1.1" fill="#222"/></svg>
<svg style="left:1785px;top:1049px;" width="19" height="14" viewBox="0 0 19 14"><path d="M0.8 4.5 H4 L8.5 0.8 V13.2 L4 9.5 H0.8Z" fill="none" stroke="#222" stroke-width="1.1" stroke-linejoin="round"/><path d="M11 4.5 A3 3 0 0 1 11 9.5 M13.5 2.5 A6 6 0 0 1 13.5 11.5 M16 0.8 A9 9 0 0 1 16 13.2" fill="none" stroke="#222" stroke-width="1.1"/></svg>
<svg style="left:1809px;top:1048px;" width="21" height="15" viewBox="0 0 21 15"><rect x="0.8" y="3.5" width="17" height="10" rx="1.5" fill="none" stroke="#222" stroke-width="1.2"/><rect x="2.5" y="5.2" width="13.6" height="6.6" fill="#3a9a2c"/><rect x="18" y="6.5" width="2" height="4" fill="#222"/><path d="M10 0.5 L7.5 8 H10 L8.5 13" fill="none" stroke="#fff" stroke-width="1.2"/><path d="M10 0 L7 8 H10.5" fill="none" stroke="#222" stroke-width="0.8"/></svg>
<div class="t" style="left:1851.7px;top:1042.2px;font-size:11.6px;color:#1b1b1b;transform:scaleX(0.9733);">12:34 PM</div>
<div class="t" style="left:1846.0px;top:1058.1px;font-size:11.6px;color:#1b1b1b;transform:scaleX(1.0664);">3/24/2026</div>
<div class="a" style="left:268px;top:147px;width:284px;height:447px;background:#fff;border:1px solid #7a7a7a;border-radius:6px;box-shadow:0 3px 10px rgba(0,0,0,.14)"></div>
<div class="t" style="left:388.3px;top:163.2px;font-size:11.8px;color:#242424;transform:scaleX(1.0434);">High-contrast only</div>
<div class="a" style="left:388px;top:174px;width:9px;height:1px;background:#242424;"></div>
<div class="a" style="left:495px;top:158px;width:45px;height:20px;border:1px solid #616161;border-radius:10px;background:#fff"></div>
<svg style="left:498px;top:161px;" width="14" height="14" viewBox="0 0 14 14"><circle cx="7" cy="7" r="6.5" fill="#616161"/></svg>
<div class="t" style="left:517.0px;top:163.2px;font-size:11.8px;color:#242424;transform:scaleX(1.0311);">Off</div>
<div class="a" style="left:270px;top:189px;width:280px;height:1px;background:#d6d6d6;"></div>
<div class="t" style="left:282.2px;top:201.8px;font-size:11.8px;color:#242424;font-weight:bold;transform:scaleX(0.9611);">Theme Colors</div>
<div class="a" style="left:272px;top:223px;width:24px;height:24px;background:#ffffff;border:1px solid #eeeeee"></div>
<div class="a" style="left:300px;top:223px;width:24px;height:24px;background:#000000;border:1px solid #eeeeee"></div>
<div class="a" style="left:328px;top:223px;width:24px;height:24px;background:#e8e8e8;border:1px solid #eeeeee"></div>
<div class="a" style="left:356px;top:223px;width:24px;height:24px;background:#0e2841;border:1px solid #eeeeee"></div>
<div class="a" style="left:384px;top:223px;width:24px;height:24px;background:#156082;border:1px solid #eeeeee"></div>
<div class="a" style="left:412px;top:223px;width:24px;height:24px;background:#e97132;border:1px solid #eeeeee"></div>
<div class="a" style="left:440px;top:223px;width:24px;height:24px;background:#196b24;border:1px solid #eeeeee"></div>
<div class="a" style="left:468px;top:223px;width:24px;height:24px;background:#0f9ed5;border:1px solid #eeeeee"></div>
<div class="a" style="left:496px;top:223px;width:24px;height:24px;background:#a02b93;border:1px solid #eeeeee"></div>
<div class="a" style="left:524px;top:223px;width:24px;height:24px;background:#4ea72e;border:1px solid #eeeeee"></div>
<div class="a" style="left:272px;top:260px;width:24px;height:120px;border:1px solid #eeeeee"></div>
<div class="a" style="left:273px;top:261.0px;width:22px;height:23.6px;background:#f2f2f2;"></div>
<div class="a" style="left:273px;top:284.6px;width:22px;height:23.6px;background:#d9d9d9;"></div>
<div class="a" style="left:273px;top:308.2px;width:22px;height:23.6px;background:#bfbfbf;"></div>
<div class="a" style="left:273px;top:331.8px;width:22px;height:23.6px;background:#a6a6a6;"></div>
<div class="a" style="left:273px;top:355.4px;width:22px;height:23.6px;background:#808080;"></div>
<div class="a" style="left:300px;top:260px;width:24px;height:120px;border:1px solid #eeeeee"></div>
<div class="a" style="left:301px;top:261.0px;width:22px;height:23.6px;background:#7f7f7f;"></div>
<div class="a" style="left:301px;top:284.6px;width:22px;height:23.6px;background:#595959;"></div>
<div class="a" style="left:301px;top:308.2px;width:22px;height:23.6px;background:#404040;"></div>
<div class="a" style="left:301px;top:331.8px;width:22px;height:23.6px;background:#262626;"></div>
<div class="a" style="left:301px;top:355.4px;width:22px;height:23.6px;background:#0d0d0d;"></div>
<div class="a" style="left:328px;top:260px;width:24px;height:120px;border:1px solid #eeeeee"></div>
<div class="a" style="left:329px;top:261.0px;width:22px;height:23.6px;background:#d1d1d1;"></div>
<div class="a" style="left:329px;top:284.6px;width:22px;height:23.6px;background:#aeaeae;"></div>
<div class="a" style="left:329px;top:308.2px;width:22px;height:23.6px;background:#747474;"></div>
<div class="a" style="left:329px;top:331.8px;width:22px;height:23.6px;background:#3a3a3a;"></div>
<div class="a" style="left:329px;top:355.4px;width:22px;height:23.6px;background:#171717;"></div>
<div class="a" style="left:356px;top:260px;width:24px;height:120px;border:1px solid #eeeeee"></div>
<div class="a" style="left:357px;top:261.0px;width:22px;height:23.6px;background:#dae6f5;"></div>
<div class="a" style="left:357px;top:284.6px;width:22px;height:23.6px;background:#a6c5ec;"></div>
<div class="a" style="left:357px;top:308.2px;width:22px;height:23.6px;background:#4f92d8;"></div>
<div class="a" style="left:357px;top:331.8px;width:22px;height:23.6px;background:#215e9f;"></div>
<div class="a" style="left:357px;top:355.4px;width:22px;height:23.6px;background:#173b63;"></div>
<div class="a" style="left:384px;top:260px;width:24px;height:120px;border:1px solid #eeeeee"></div>
<div class="a" style="left:385px;top:261.0px;width:22px;height:23.6px;background:#c1e4f5;"></div>
<div class="a" style="left:385px;top:284.6px;width:22px;height:23.6px;background:#83cbeb;"></div>
<div class="a" style="left:385px;top:308.2px;width:22px;height:23.6px;background:#45b0e1;"></div>
<div class="a" style="left:385px;top:331.8px;width:22px;height:23.6px;background:#104862;"></div>
<div class="a" style="left:385px;top:355.4px;width:22px;height:23.6px;background:#0c3a50;"></div>
<div class="a" style="left:412px;top:260px;width:24px;height:120px;border:1px solid #eeeeee"></div>
<div class="a" style="left:413px;top:261.0px;width:22px;height:23.6px;background:#fbe2d5;"></div>
<div class="a" style="left:413px;top:284.6px;width:22px;height:23.6px;background:#f7c7ac;"></div>
<div class="a" style="left:413px;top:308.2px;width:22px;height:23.6px;background:#f1a983;"></div>
<div class="a" style="left:413px;top:331.8px;width:22px;height:23.6px;background:#c04f15;"></div>
<div class="a" style="left:413px;top:355.4px;width:22px;height:23.6px;background:#7f3510;"></div>
<div class="a" style="left:440px;top:260px;width:24px;height:120px;border:1px solid #eeeeee"></div>
<div class="a" style="left:441px;top:261.0px;width:22px;height:23.6px;background:#c2f0c8;"></div>
<div class="a" style="left:441px;top:284.6px;width:22px;height:23.6px;background:#86e295;"></div>
<div class="a" style="left:441px;top:308.2px;width:22px;height:23.6px;background:#48d35e;"></div>
<div class="a" style="left:441px;top:331.8px;width:22px;height:23.6px;background:#124f1b;"></div>
<div class="a" style="left:441px;top:355.4px;width:22px;height:23.6px;background:#0c3612;"></div>
<div class="a" style="left:468px;top:260px;width:24px;height:120px;border:1px solid #eeeeee"></div>
<div class="a" style="left:469px;top:261.0px;width:22px;height:23.6px;background:#caedfb;"></div>
<div class="a" style="left:469px;top:284.6px;width:22px;height:23.6px;background:#95dcf7;"></div>
<div class="a" style="left:469px;top:308.2px;width:22px;height:23.6px;background:#61cbf3;"></div>
<div class="a" style="left:469px;top:331.8px;width:22px;height:23.6px;background:#0b769f;"></div>
<div class="a" style="left:469px;top:355.4px;width:22px;height:23.6px;background:#074f6a;"></div>
<div class="a" style="left:496px;top:260px;width:24px;height:120px;border:1px solid #eeeeee"></div>
<div class="a" style="left:497px;top:261.0px;width:22px;height:23.6px;background:#f2ceef;"></div>
<div class="a" style="left:497px;top:284.6px;width:22px;height:23.6px;background:#e49edd;"></div>
<div class="a" style="left:497px;top:308.2px;width:22px;height:23.6px;background:#d86dcd;"></div>
<div class="a" style="left:497px;top:331.8px;width:22px;height:23.6px;background:#782270;"></div>
<div class="a" style="left:497px;top:355.4px;width:22px;height:23.6px;background:#501549;"></div>
<div class="a" style="left:524px;top:260px;width:24px;height:120px;border:1px solid #eeeeee"></div>
<div class="a" style="left:525px;top:261.0px;width:22px;height:23.6px;background:#d9f2d0;"></div>
<div class="a" style="left:525px;top:284.6px;width:22px;height:23.6px;background:#b4e5a2;"></div>
<div class="a" style="left:525px;top:308.2px;width:22px;height:23.6px;background:#8ed973;"></div>
<div class="a" style="left:525px;top:331.8px;width:22px;height:23.6px;background:#3a7d22;"></div>
<div class="a" style="left:525px;top:355.4px;width:22px;height:23.6px;background:#275317;"></div>
<div class="a" style="left:270px;top:392px;width:280px;height:1px;background:#d6d6d6;"></div>
<div class="t" style="left:282.0px;top:404.6px;font-size:11.8px;color:#242424;font-weight:bold;transform:scaleX(0.9481);">Standard Colors</div>
<div class="a" style="left:272px;top:426px;width:24px;height:24px;background:#c00000;border:1px solid #eeeeee"></div>
<div class="a" style="left:300px;top:426px;width:24px;height:24px;background:#ff0000;border:1px solid #eeeeee"></div>
<div class="a" style="left:328px;top:426px;width:24px;height:24px;background:#ffc000;border:1px solid #eeeeee"></div>
<div class="a" style="left:356px;top:426px;width:24px;height:24px;background:#ffff00;border:1px solid #eeeeee"></div>
<div class="a" style="left:384px;top:426px;width:24px;height:24px;background:#92d050;border:1px solid #eeeeee"></div>
<div class="a" style="left:412px;top:426px;width:24px;height:24px;background:#00b050;border:1px solid #eeeeee"></div>
<div class="a" style="left:440px;top:426px;width:24px;height:24px;background:#00b0f0;border:1px solid #eeeeee"></div>
<div class="a" style="left:468px;top:426px;width:24px;height:24px;background:#0070c0;border:1px solid #eeeeee"></div>
<div class="a" style="left:496px;top:426px;width:24px;height:24px;background:#002060;border:1px solid #eeeeee"></div>
<div class="a" style="left:524px;top:426px;width:24px;height:24px;background:#7030a0;border:1px solid #eeeeee"></div>
<div class="a" style="left:356px;top:426px;width:24px;height:24px;border:1.5px solid #e2532a;box-shadow:inset 0 0 0 1px #fff"></div>
<div class="a" style="left:270px;top:461px;width:280px;height:1px;background:#d6d6d6;"></div>
<div class="t" style="left:282.0px;top:473.5px;font-size:11.8px;color:#242424;font-weight:bold;transform:scaleX(1.0753);">Recent Colors</div>
<div class="a" style="left:272px;top:495px;width:24px;height:24px;background:#990000;border:1px solid #eeeeee"></div>
<div class="a" style="left:300px;top:495px;width:24px;height:24px;background:#a07800;border:1px solid #eeeeee"></div>
<div class="a" style="left:328px;top:495px;width:24px;height:24px;background:#ffdd85;border:1px solid #eeeeee"></div>
<div class="a" style="left:356px;top:495px;width:24px;height:24px;background:#b08600;border:1px solid #eeeeee"></div>
<div class="a" style="left:384px;top:495px;width:24px;height:24px;background:#ffffc0;border:1px solid #eeeeee"></div>
<div class="a" style="left:412px;top:495px;width:24px;height:24px;background:#ffe59c;border:1px solid #eeeeee"></div>
<div class="a" style="left:440px;top:495px;width:24px;height:24px;background:#ffd460;border:1px solid #eeeeee"></div>
<div class="a" style="left:468px;top:495px;width:24px;height:24px;background:#550000;border:1px solid #eeeeee"></div>
<div class="a" style="left:496px;top:495px;width:24px;height:24px;background:#ffc5c5;border:1px solid #eeeeee"></div>
<div class="a" style="left:524px;top:495px;width:24px;height:24px;background:#ffa5a5;border:1px solid #eeeeee"></div>
<div class="a" style="left:270px;top:530px;width:280px;height:1px;background:#d6d6d6;"></div>
<div class="a" style="left:282px;top:538px;width:16px;height:16px;background:#fff;border:1px solid #e6e6e6"></div>
<div class="t" style="left:306.3px;top:542.0px;font-size:11.8px;color:#242424;transform:scaleX(1.0082);">No Fill</div>
<div class="a" style="left:306px;top:553px;width:9px;height:1px;background:#242424;"></div>
<div class="a" style="left:270px;top:561px;width:280px;height:1px;background:#d6d6d6;"></div>
<svg style="left:282px;top:566px;" width="16" height="16" viewBox="0 0 16 16"><path d="M8 1 C12.5 1 15.5 4 15.5 7.5 C15.5 10 13.5 10.5 12 10.5 C10.5 10.5 10 11.5 10.5 13 C11 14.5 10 15.5 8.5 15 C4 14.5 0.8 11.5 0.8 7.5 C0.8 3.5 3.8 1 8 1Z" fill="#fff" stroke="#333" stroke-width="1"/>
<circle cx="4.3" cy="5.2" r="1" fill="#1e88e5"/><circle cx="7.2" cy="3.8" r="1" fill="#2ea043"/><circle cx="10.3" cy="4.5" r="1" fill="#f08c00"/><circle cx="12" cy="7" r="1" fill="#e53935"/><circle cx="9" cy="10" r="1" fill="#9c27b0"/></svg>
<div class="t" style="left:302.0px;top:569.0px;font-size:11.8px;color:#242424;transform:scaleX(0.9922);">More Colors...</div>
<div class="a" style="left:302px;top:580px;width:10px;height:1px;background:#242424;"></div>
</body></html>
